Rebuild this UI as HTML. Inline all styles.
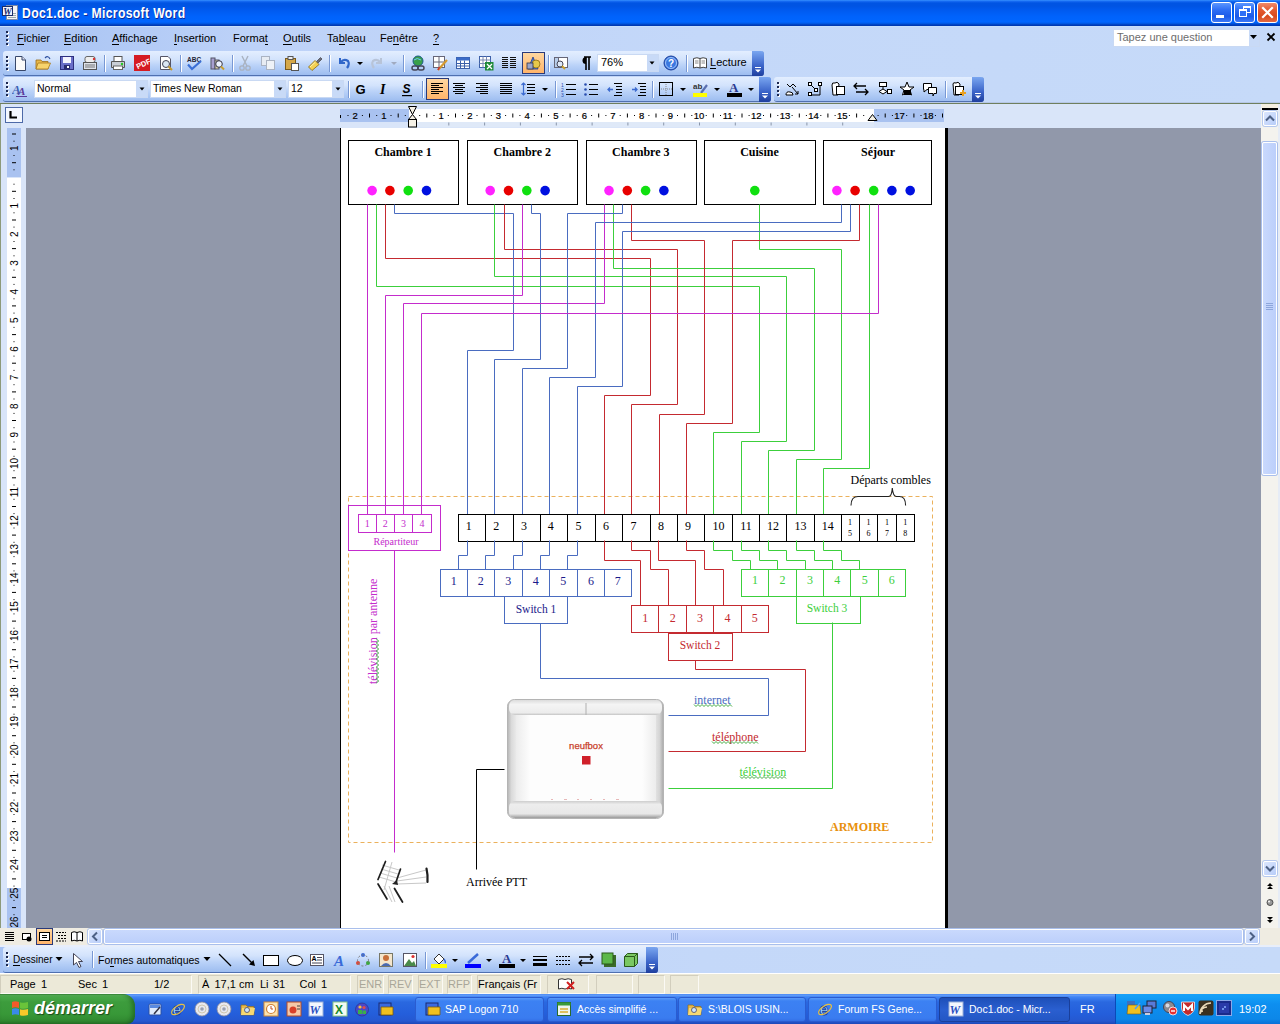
<!DOCTYPE html><html><head><meta charset="utf-8"><style>
html,body{margin:0;padding:0;width:1280px;height:1024px;overflow:hidden;position:relative;background:#c4d3f7;font-family:"Liberation Sans",sans-serif;}
div{box-sizing:border-box;}
.ser{font-family:"Liberation Serif",serif;}
.tb{position:absolute;border-radius:3px;background:linear-gradient(to bottom,#e3eeff 0%,#d3e3fc 35%,#bad2f8 60%,#9dbdf0 100%);border-bottom:1px solid #4f70b0;border-right:1px solid #7898d0;}
.grip{position:absolute;width:2px;height:2px;background:#1c2850;box-shadow:1px 1px 0 #fff;}
.sep{position:absolute;width:1px;height:17px;background:#7898d4;box-shadow:1px 0 0 #fff;}
.ico{position:absolute;}
.mi{position:absolute;top:32px;font-size:11px;color:#000;}
.mi u{text-decoration:none;border-bottom:1px solid #000;}
</style></head><body>

<div style="position:absolute;left:0px;top:0px;width:1280px;height:26px;background:linear-gradient(to bottom,#3b96ff 0px,#1a6ff5 1px,#0054e3 3px,#0054e3 6px,#005aef 10px,#0062fb 16px,#0066ff 22px,#0052d8 24px,#0039b3 25px,#0039b3 26px);"></div>
<svg style="position:absolute;left:2px;top:4px" width="17" height="17" viewBox="0 0 17 17">
<rect x="4.5" y="1.5" width="11" height="14" fill="#f4f4f4" stroke="#7b8aa8"/>
<rect x="6" y="9" width="8" height="1" fill="#9aa"/><rect x="6" y="11" width="8" height="1" fill="#9aa"/><rect x="6" y="13" width="8" height="1" fill="#9aa"/>
<rect x="0.5" y="2.5" width="10" height="9" fill="#f0f4ff" stroke="#1b2e6a"/>
<text x="1.2" y="10.5" font-family="Liberation Serif" font-weight="bold" font-style="italic" font-size="9.5" fill="#1a2a70">W</text>
</svg>
<div style="position:absolute;left:22px;top:5px;white-space:nowrap;font-size:14px;font-weight:bold;color:#fff;text-shadow:1px 1px 0 #0a2a9a;letter-spacing:0.4px;transform:scaleX(0.87);transform-origin:0 0;">Doc1.doc - Microsoft Word</div>
<div style="position:absolute;left:1211px;top:2px;width:21px;height:21px;border:1px solid #fff;border-radius:3px;background:linear-gradient(to bottom,#5b96ff 0%,#2f6ff5 35%,#1c5ae8 70%,#3a78f7 100%);"></div>
<div style="position:absolute;left:1234px;top:2px;width:21px;height:21px;border:1px solid #fff;border-radius:3px;background:linear-gradient(to bottom,#5b96ff 0%,#2f6ff5 35%,#1c5ae8 70%,#3a78f7 100%);"></div>
<div style="position:absolute;left:1257px;top:2px;width:21px;height:21px;border:1px solid #fff;border-radius:3px;background:linear-gradient(to bottom,#f08a6a 0%,#e2582e 40%,#d84a1e 70%,#e46a42 100%);"></div>
<div style="position:absolute;left:1216px;top:15px;width:8px;height:3px;background:#fff;"></div>
<div style="position:absolute;left:1243px;top:6px;width:8px;height:7px;border:1px solid #fff;border-top-width:2px;"></div>
<div style="position:absolute;left:1239px;top:9px;width:8px;height:8px;border:1px solid #fff;border-top-width:2px;background:#2f6ff5;"></div>
<svg style="position:absolute;left:1257px;top:2px" width="21" height="21"><path d="M6 6 L15 15 M15 6 L6 15" stroke="#fff" stroke-width="2.2" stroke-linecap="square"/></svg>
<div style="position:absolute;left:0px;top:26px;width:1280px;height:77px;background:linear-gradient(to right,#a6c2f3 0px,#bdd2f8 250px,#c4d8f9 700px,#c6daf9 1280px);"></div>
<div style="position:absolute;left:0px;top:26px;width:1280px;height:1px;background:#c8e0fb;"></div>
<div class="grip" style="left:6px;top:31px"></div>
<div class="grip" style="left:6px;top:35px"></div>
<div class="grip" style="left:6px;top:39px"></div>
<div class="grip" style="left:6px;top:43px"></div>
<div class="mi" style="left:17px;"><u>F</u>ichier</div>
<div class="mi" style="left:64px;"><u>E</u>dition</div>
<div class="mi" style="left:112px;"><u>A</u>ffichage</div>
<div class="mi" style="left:174px;"><u>I</u>nsertion</div>
<div class="mi" style="left:233px;">Forma<u>t</u></div>
<div class="mi" style="left:283px;"><u>O</u>utils</div>
<div class="mi" style="left:327px;">Ta<u>b</u>leau</div>
<div class="mi" style="left:380px;">Fe<u>n</u>être</div>
<div class="mi" style="left:433px;"><u>?</u></div>
<div style="position:absolute;left:1113px;top:29px;width:147px;height:18px;background:#fff;border:1px solid #c9d9f3;"></div>
<div style="position:absolute;left:1117px;top:31px;white-space:nowrap;font-size:11px;color:#6d6d6d;">Tapez une question</div>
<div style="position:absolute;left:1249px;top:30px;width:10px;height:16px;background:#c8daf7;"></div>
<svg style="position:absolute;left:1250px;top:35px" width="8" height="5"><path d="M0 0 H7 L3.5 4Z" fill="#000"/></svg>
<svg style="position:absolute;left:1266px;top:32px" width="10" height="10"><path d="M1.5 1.5 L8.5 8.5 M8.5 1.5 L1.5 8.5" stroke="#000" stroke-width="1.8"/></svg>
<div class="tb" style="left:3px;top:51px;width:761px;height:25px;"></div>
<div class="grip" style="left:6px;top:56px"></div>
<div class="grip" style="left:6px;top:60px"></div>
<div class="grip" style="left:6px;top:64px"></div>
<div class="grip" style="left:6px;top:68px"></div>
<div style="position:absolute;left:752px;top:51px;width:12px;height:25px;border-radius:0 3px 3px 0;background:linear-gradient(to bottom,#7aa6f0,#3a63c8 60%,#1f3f9e);"></div>
<svg style="position:absolute;left:754px;top:67px" width="8" height="7"><path d="M1 0.5 H7" stroke="#fff" stroke-width="1"/><path d="M1 2.5 H7 L4 5.5Z" fill="#fff"/></svg>
<div class="tb" style="left:3px;top:77px;width:768px;height:25px;"></div>
<div class="grip" style="left:6px;top:82px"></div>
<div class="grip" style="left:6px;top:86px"></div>
<div class="grip" style="left:6px;top:90px"></div>
<div class="grip" style="left:6px;top:94px"></div>
<div style="position:absolute;left:759px;top:77px;width:12px;height:25px;border-radius:0 3px 3px 0;background:linear-gradient(to bottom,#7aa6f0,#3a63c8 60%,#1f3f9e);"></div>
<svg style="position:absolute;left:761px;top:93px" width="8" height="7"><path d="M1 0.5 H7" stroke="#fff" stroke-width="1"/><path d="M1 2.5 H7 L4 5.5Z" fill="#fff"/></svg>
<div class="tb" style="left:774px;top:77px;width:210px;height:25px;"></div>
<div class="grip" style="left:777px;top:82px"></div>
<div class="grip" style="left:777px;top:86px"></div>
<div class="grip" style="left:777px;top:90px"></div>
<div class="grip" style="left:777px;top:94px"></div>
<div style="position:absolute;left:972px;top:77px;width:12px;height:25px;border-radius:0 3px 3px 0;background:linear-gradient(to bottom,#7aa6f0,#3a63c8 60%,#1f3f9e);"></div>
<svg style="position:absolute;left:974px;top:93px" width="8" height="7"><path d="M1 0.5 H7" stroke="#fff" stroke-width="1"/><path d="M1 2.5 H7 L4 5.5Z" fill="#fff"/></svg>
<svg class="ico" style="left:12px;top:55px" width="16" height="16" viewBox="0 0 16 16"><path d="M3.5 1.5 H10 L13.5 5 V15.5 H3.5Z" fill="#fafafa" stroke="#37476a"/><path d="M10 1.5 V5 H13.5" fill="#dde" stroke="#37476a"/></svg>
<svg class="ico" style="left:35px;top:55px" width="16" height="16" viewBox="0 0 16 16"><path d="M1 5 H6 L7 6.5 H13 V14 H1Z" fill="#e8b84a" stroke="#9b6d1a" stroke-width="0.8"/><path d="M3 8 H15.5 L13 14 H1Z" fill="#f7d36b" stroke="#a87a20" stroke-width="0.8"/><path d="M10 3 Q13 0 15 4" fill="none" stroke="#2d4f9e" stroke-width="1.2"/></svg>
<svg class="ico" style="left:59px;top:55px" width="16" height="16" viewBox="0 0 16 16"><rect x="1.5" y="1.5" width="13" height="13" fill="#6a6fc8" stroke="#2e2f7e"/><rect x="4" y="2" width="8" height="6" fill="#f4f4ff"/><rect x="5" y="10" width="6" height="4" fill="#2a2c70"/><rect x="8" y="11" width="2" height="2" fill="#fff"/></svg>
<svg class="ico" style="left:82px;top:55px" width="16" height="16" viewBox="0 0 16 16"><rect x="3" y="1.5" width="10" height="6" fill="#eee" stroke="#666" rx="2"/><rect x="1.5" y="7.5" width="13" height="7" fill="#dfe3ea" stroke="#555"/><rect x="3" y="9.5" width="10" height="1" fill="#777"/><rect x="3" y="11.5" width="10" height="1" fill="#777"/><circle cx="12" cy="4" r="1.2" fill="#d33"/></svg>
<svg class="ico" style="left:110px;top:55px" width="16" height="16" viewBox="0 0 16 16"><rect x="4" y="1.5" width="8" height="5" fill="#fff" stroke="#555"/><path d="M1.5 6.5 H14.5 V12.5 H1.5Z" fill="#c9ced6" stroke="#555"/><rect x="3.5" y="11" width="9" height="3.5" fill="#fff" stroke="#666"/><circle cx="12" cy="9" r="1.2" fill="#2c2"/></svg>
<svg class="ico" style="left:134px;top:55px" width="16" height="16" viewBox="0 0 16 16"><rect x="0" y="0" width="16" height="16" fill="#d51b22"/><text x="1.5" y="12" font-family="Liberation Sans" font-weight="bold" font-size="7.5" fill="#fff" transform="rotate(-25 8 8)">PDF</text></svg>
<svg class="ico" style="left:158px;top:55px" width="16" height="16" viewBox="0 0 16 16"><path d="M2.5 1.5 H10 L12.5 4 V14.5 H2.5Z" fill="#fff" stroke="#556"/><circle cx="8" cy="9" r="3.5" fill="#dce8f4" stroke="#445"/><path d="M10.5 11.5 L14 15" stroke="#c79a2a" stroke-width="2"/></svg>
<svg class="ico" style="left:186px;top:55px" width="16" height="16" viewBox="0 0 16 16"><text x="1" y="6.5" font-family="Liberation Sans" font-weight="bold" font-size="6.5" fill="#223">ABC</text><path d="M2 9.5 L6 14 L15 6" fill="none" stroke="#3a6fd6" stroke-width="2.2"/></svg>
<svg class="ico" style="left:209px;top:55px" width="16" height="16" viewBox="0 0 16 16"><rect x="2" y="3" width="4" height="11" fill="#a7a0d0" stroke="#556"/><rect x="6" y="5" width="4" height="9" fill="#d8d0a0" stroke="#556"/><circle cx="10" cy="9" r="3.3" fill="#eef4ff" stroke="#334" /><path d="M12 11.5 L15 14.5" stroke="#c9a030" stroke-width="2"/></svg>
<svg class="ico" style="left:237px;top:55px" width="16" height="16" viewBox="0 0 16 16"><path d="M5 1 L10 11 M11 1 L6 11" stroke="#a9b2c0" stroke-width="1.4"/><circle cx="5" cy="13" r="2.2" fill="none" stroke="#a9b2c0" stroke-width="1.3"/><circle cx="11" cy="13" r="2.2" fill="none" stroke="#a9b2c0" stroke-width="1.3"/></svg>
<svg class="ico" style="left:260px;top:55px" width="16" height="16" viewBox="0 0 16 16"><rect x="1.5" y="1.5" width="8" height="9" fill="#e7ecf3" stroke="#aab3c2"/><rect x="6.5" y="5.5" width="8" height="9" fill="#eef2f7" stroke="#aab3c2"/></svg>
<svg class="ico" style="left:284px;top:55px" width="16" height="16" viewBox="0 0 16 16"><rect x="1.5" y="3.5" width="10" height="11" fill="#d5a84a" stroke="#7b5a1c"/><rect x="4" y="1.5" width="5" height="3" fill="#eee" stroke="#555"/><rect x="7.5" y="8.5" width="7" height="7" fill="#fff" stroke="#555"/></svg>
<svg class="ico" style="left:307px;top:55px" width="16" height="16" viewBox="0 0 16 16"><path d="M9.5 6.5 L13.5 2.5 L15 4 L11 8Z" fill="#6a6a7a" stroke="#333" stroke-width="0.6"/><path d="M1.5 12 L8 5.5 L12 9.5 L5 15.5Z" fill="#f4d050" stroke="#8a6a10" stroke-width="0.8"/><path d="M3 12 L8.5 7" stroke="#fff4b0" stroke-width="1"/></svg>
<svg class="ico" style="left:336px;top:55px" width="16" height="16" viewBox="0 0 16 16"><path d="M4 3 V8 H9" fill="none" stroke="#3167c9" stroke-width="2"/><path d="M4.5 7.5 Q8 3 12 6 Q14 9 11 13" fill="none" stroke="#3167c9" stroke-width="2.2"/></svg>
<svg class="ico" style="left:369px;top:55px" width="16" height="16" viewBox="0 0 16 16"><path d="M12 3 V8 H7" fill="none" stroke="#b8c4d8" stroke-width="2"/><path d="M11.5 7.5 Q8 3 4 6 Q2 9 5 13" fill="none" stroke="#b8c4d8" stroke-width="2.2"/></svg>
<svg class="ico" style="left:410px;top:55px" width="16" height="16" viewBox="0 0 16 16"><circle cx="8" cy="6" r="5" fill="#3aa04a" stroke="#1d5a8a"/><path d="M4 5 Q7 2 11 5" fill="none" stroke="#6fc4ff"/><rect x="2" y="11" width="6" height="4" rx="2" fill="none" stroke="#445" stroke-width="1.4"/><rect x="8" y="11" width="6" height="4" rx="2" fill="none" stroke="#445" stroke-width="1.4"/></svg>
<svg class="ico" style="left:432px;top:55px" width="16" height="16" viewBox="0 0 16 16"><rect x="1.5" y="1.5" width="11" height="11" fill="#fff" stroke="#667"/><path d="M7 1.5 V12.5 M1.5 7 H12.5" stroke="#667"/><path d="M6 15 L15 5" stroke="#d59a30" stroke-width="2.2"/><path d="M6 15 L7.5 12" stroke="#c33" stroke-width="1.5"/></svg>
<svg class="ico" style="left:455px;top:55px" width="16" height="16" viewBox="0 0 16 16"><rect x="1.5" y="2.5" width="13" height="11" fill="#fff" stroke="#3b5fa8"/><rect x="1.5" y="2.5" width="13" height="3" fill="#3b6cc8"/><path d="M5.5 5.5 V13.5 M9.5 5.5 V13.5 M1.5 8.5 H14.5 M1.5 11 H14.5" stroke="#3b5fa8"/></svg>
<svg class="ico" style="left:478px;top:55px" width="16" height="16" viewBox="0 0 16 16"><rect x="1.5" y="1.5" width="11" height="11" fill="#fff" stroke="#3b5fa8"/><path d="M1.5 5 H12.5 M1.5 8.5 H12.5 M5 1.5 V12.5 M8.5 1.5 V12.5" stroke="#7a8ab0"/><rect x="7" y="7" width="8.5" height="8.5" fill="#1f8a3a"/><path d="M9 9 L14 14 M14 9 L9 14" stroke="#fff" stroke-width="1.3"/></svg>
<svg class="ico" style="left:501px;top:55px" width="16" height="16" viewBox="0 0 16 16"><path d="M1 2.5 H7 M1 4.5 H7 M1 6.5 H7 M1 8.5 H7 M1 10.5 H7 M1 12.5 H7 M9 2.5 H15 M9 4.5 H15 M9 6.5 H15 M9 8.5 H15 M9 10.5 H15 M9 12.5 H15" stroke="#111" stroke-width="1"/></svg>
<svg class="ico" style="left:356px;top:55px" width="8" height="16" viewBox="0 0 8 16"><path d="M1 7 H7 L4 10Z" fill="#000"/></svg>
<svg class="ico" style="left:390px;top:55px" width="8" height="16" viewBox="0 0 8 16"><path d="M1 7 H7 L4 10Z" fill="#a0aac0"/></svg>
<div class="sep" style="left:104px;top:55px"></div>
<div class="sep" style="left:180px;top:55px"></div>
<div class="sep" style="left:232px;top:55px"></div>
<div class="sep" style="left:329px;top:55px"></div>
<div class="sep" style="left:403px;top:55px"></div>
<div class="sep" style="left:548px;top:55px"></div>
<div class="sep" style="left:686px;top:55px"></div>
<div style="position:absolute;left:522px;top:52px;width:23px;height:22px;background:linear-gradient(#ffd7a0,#ffb46a);border:1px solid #2a3a7a;"></div>
<svg class="ico" style="left:525px;top:55px" width="16" height="16" viewBox="0 0 16 16"><path d="M3 14 L8 2 L13 14Z" fill="#4d7ad8" stroke="#1d3a8a" stroke-width="0.8"/><circle cx="11" cy="9" r="4" fill="#e7c84a" stroke="#8a6a10" stroke-width="0.8"/><rect x="2" y="8" width="6" height="6" fill="#9aa4c8" stroke="#334" stroke-width="0.8"/></svg>
<svg class="ico" style="left:553px;top:55px" width="16" height="16" viewBox="0 0 16 16"><rect x="1.5" y="2.5" width="13" height="10" fill="#fff" stroke="#667"/><rect x="1.5" y="2.5" width="4" height="10" fill="#b8cdea" stroke="#667"/><circle cx="7" cy="9" r="3" fill="#dde8f8" stroke="#445"/><path d="M9 11 L12 14" stroke="#c9a030" stroke-width="2"/></svg>
<svg class="ico" style="left:577px;top:55px" width="16" height="16" viewBox="0 0 16 16"><path d="M7 2 H14 M9 2 V15 M12 2 V15" stroke="#000" stroke-width="1.6"/><path d="M9 2 A3.5 3.5 0 0 0 9 9Z" fill="#000"/></svg>
<div style="position:absolute;left:597px;top:54px;width:62px;height:18px;background:#fff;border:1px solid #c9d9f3;"></div>
<div style="position:absolute;left:601px;top:56px;white-space:nowrap;font-size:11px;color:#000;">76%</div>
<div style="position:absolute;left:647px;top:55px;width:11px;height:16px;background:#c8daf7;"></div>
<svg class="ico" style="left:648px;top:61px" width="8" height="5"><path d="M1.5 0.5 H6.5 L4 3.5Z" fill="#000"/></svg>
<svg class="ico" style="left:663px;top:55px" width="16" height="16" viewBox="0 0 16 16"><circle cx="8" cy="8" r="7" fill="#3b78e0" stroke="#1c3f9a"/><circle cx="8" cy="8" r="5.5" fill="none" stroke="#bcd6ff" stroke-width="0.8"/><text x="5" y="12" font-family="Liberation Sans" font-weight="bold" font-size="10" fill="#fff">?</text></svg>
<svg class="ico" style="left:692px;top:55px" width="16" height="16" viewBox="0 0 16 16"><path d="M1.5 3.5 Q5 2 8 3.5 Q11 2 14.5 3.5 V13 Q11 11.5 8 13 Q5 11.5 1.5 13Z" fill="#fff" stroke="#444"/><path d="M8 3.5 V13" stroke="#444"/><path d="M3 6 H6.5 M3 8 H6.5 M9.5 6 H13 M9.5 8 H13" stroke="#888"/></svg>
<div style="position:absolute;left:710px;top:56px;white-space:nowrap;font-size:11px;color:#000;"><u style="text-decoration:none;border-bottom:1px solid #000">L</u>ecture</div>
<svg class="ico" style="left:12px;top:81px" width="16" height="16" viewBox="0 0 16 16"><text x="0" y="13" font-family="Liberation Serif" font-style="italic" font-weight="bold" font-size="13" fill="#3f62b3">A</text><text x="6" y="14" font-family="Liberation Serif" font-style="italic" font-weight="bold" font-size="11" fill="#5a3a9a">A</text><rect x="4" y="15" width="11" height="1" fill="#5a3a9a"/></svg>
<div style="position:absolute;left:34px;top:80px;width:114px;height:18px;background:#fff;border:1px solid #c9d9f3;"></div>
<div style="position:absolute;left:37px;top:82px;white-space:nowrap;font-size:10.5px;color:#000;">Normal</div>
<div style="position:absolute;left:136px;top:81px;width:11px;height:16px;background:#c8daf7;"></div>
<svg class="ico" style="left:138px;top:87px" width="8" height="5"><path d="M1.5 0.5 H6.5 L4 3.5Z" fill="#000"/></svg>
<div style="position:absolute;left:150px;top:80px;width:136px;height:18px;background:#fff;border:1px solid #c9d9f3;"></div>
<div style="position:absolute;left:153px;top:82px;white-space:nowrap;font-size:10.5px;color:#000;">Times New Roman</div>
<div style="position:absolute;left:274px;top:81px;width:11px;height:16px;background:#c8daf7;"></div>
<svg class="ico" style="left:276px;top:87px" width="8" height="5"><path d="M1.5 0.5 H6.5 L4 3.5Z" fill="#000"/></svg>
<div style="position:absolute;left:288px;top:80px;width:56px;height:18px;background:#fff;border:1px solid #c9d9f3;"></div>
<div style="position:absolute;left:291px;top:82px;white-space:nowrap;font-size:10.5px;color:#000;">12</div>
<div style="position:absolute;left:332px;top:81px;width:11px;height:16px;background:#c8daf7;"></div>
<svg class="ico" style="left:334px;top:87px" width="8" height="5"><path d="M1.5 0.5 H6.5 L4 3.5Z" fill="#000"/></svg>
<div class="sep" style="left:348px;top:81px"></div>
<div class="sep" style="left:422px;top:81px"></div>
<div class="sep" style="left:555px;top:81px"></div>
<div class="sep" style="left:652px;top:81px"></div>
<div style="position:absolute;left:426px;top:78px;width:23px;height:22px;background:linear-gradient(#ffd7a0,#ffb46a);border:1px solid #2a3a7a;"></div>
<svg class="ico" style="left:353px;top:81px" width="16" height="16" viewBox="0 0 16 16"><text x="2.5" y="13" font-family="Liberation Sans" font-weight="bold" font-size="13" fill="#000">G</text></svg>
<svg class="ico" style="left:376px;top:81px" width="16" height="16" viewBox="0 0 16 16"><text x="4" y="13" font-family="Liberation Serif" font-style="italic" font-weight="bold" font-size="14" fill="#000">I</text></svg>
<svg class="ico" style="left:399px;top:81px" width="16" height="16" viewBox="0 0 16 16"><text x="3.5" y="12" font-family="Liberation Sans" font-style="italic" font-weight="bold" font-size="12" fill="#000">S</text><rect x="3" y="14" width="10" height="1.2" fill="#000"/></svg>
<svg class="ico" style="left:429px;top:81px" width="16" height="16" viewBox="0 0 16 16"><path d="M2 2.5 H14 M2 4.5 H10 M2 6.5 H14 M2 8.5 H10 M2 10.5 H14 M2 12.5 H10" stroke="#000" stroke-width="1"/></svg>
<svg class="ico" style="left:451px;top:81px" width="16" height="16" viewBox="0 0 16 16"><path d="M2 2.5 H14 M4 4.5 H12 M2 6.5 H14 M4 8.5 H12 M2 10.5 H14 M4 12.5 H12" stroke="#000" stroke-width="1"/></svg>
<svg class="ico" style="left:474px;top:81px" width="16" height="16" viewBox="0 0 16 16"><path d="M2 2.5 H14 M6 4.5 H14 M2 6.5 H14 M6 8.5 H14 M2 10.5 H14 M6 12.5 H14" stroke="#000" stroke-width="1"/></svg>
<svg class="ico" style="left:498px;top:81px" width="16" height="16" viewBox="0 0 16 16"><path d="M2 2.5 H14 M2 4.5 H14 M2 6.5 H14 M2 8.5 H14 M2 10.5 H14 M2 12.5 H14" stroke="#000" stroke-width="1"/></svg>
<svg class="ico" style="left:520px;top:81px" width="16" height="16" viewBox="0 0 16 16"><path d="M7 3.5 H15 M7 6.5 H15 M7 9.5 H15 M7 12.5 H15" stroke="#000"/><path d="M3.5 2 V14 M1.5 4 L3.5 2 L5.5 4 M1.5 12 L3.5 14 L5.5 12" fill="none" stroke="#3b6ad0" stroke-width="1.2"/></svg>
<svg class="ico" style="left:561px;top:81px" width="16" height="16" viewBox="0 0 16 16"><text x="0" y="6" font-size="5" font-family="Liberation Sans" fill="#2a4fb0">1</text><text x="0" y="11" font-size="5" font-family="Liberation Sans" fill="#2a4fb0">2</text><text x="0" y="16" font-size="5" font-family="Liberation Sans" fill="#2a4fb0">3</text><path d="M5 3.5 H15 M5 8.5 H15 M5 13.5 H15" stroke="#000" stroke-width="1"/></svg>
<svg class="ico" style="left:583px;top:81px" width="16" height="16" viewBox="0 0 16 16"><circle cx="2.5" cy="3.5" r="1.3" fill="#2a4fb0"/><circle cx="2.5" cy="8.5" r="1.3" fill="#2a4fb0"/><circle cx="2.5" cy="13.5" r="1.3" fill="#2a4fb0"/><path d="M6 3.5 H15 M6 8.5 H15 M6 13.5 H15" stroke="#000" stroke-width="1"/></svg>
<svg class="ico" style="left:607px;top:81px" width="16" height="16" viewBox="0 0 16 16"><path d="M7 2.5 H15 M9 5.5 H15 M9 8.5 H15 M9 11.5 H15 M7 14.5 H15" stroke="#000" stroke-width="1"/><path d="M6 8.5 H1 M3 6.5 L1 8.5 L3 10.5" fill="none" stroke="#3b6ad0" stroke-width="1.3"/></svg>
<svg class="ico" style="left:631px;top:81px" width="16" height="16" viewBox="0 0 16 16"><path d="M7 2.5 H15 M9 5.5 H15 M9 8.5 H15 M9 11.5 H15 M7 14.5 H15" stroke="#000" stroke-width="1"/><path d="M1 8.5 H6 M4 6.5 L6 8.5 L4 10.5" fill="none" stroke="#3b6ad0" stroke-width="1.3"/></svg>
<svg class="ico" style="left:658px;top:81px" width="16" height="16" viewBox="0 0 16 16"><rect x="1.5" y="1.5" width="13" height="13" fill="none" stroke="#000"/><path d="M8 3 V14 M3 8 H14" stroke="#888" stroke-dasharray="1 1"/></svg>
<svg class="ico" style="left:693px;top:81px" width="16" height="16" viewBox="0 0 16 16"><text x="0" y="8" font-size="8" font-family="Liberation Sans" font-weight="bold" fill="#333">ab</text><path d="M8 12 L14 4" stroke="#5a6fb0" stroke-width="2.2"/><rect x="0" y="12" width="14" height="4" fill="#ffff00"/></svg>
<svg class="ico" style="left:727px;top:81px" width="16" height="16" viewBox="0 0 16 16"><text x="2" y="11" font-size="13" font-family="Liberation Serif" font-weight="bold" fill="#2a3a90">A</text><rect x="0" y="12" width="15" height="4" fill="#000"/></svg>
<svg class="ico" style="left:541px;top:81px" width="8" height="16" viewBox="0 0 8 16"><path d="M1 7 H7 L4 10Z" fill="#000"/></svg>
<svg class="ico" style="left:679px;top:81px" width="8" height="16" viewBox="0 0 8 16"><path d="M1 7 H7 L4 10Z" fill="#000"/></svg>
<svg class="ico" style="left:713px;top:81px" width="8" height="16" viewBox="0 0 8 16"><path d="M1 7 H7 L4 10Z" fill="#000"/></svg>
<svg class="ico" style="left:747px;top:81px" width="8" height="16" viewBox="0 0 8 16"><path d="M1 7 H7 L4 10Z" fill="#000"/></svg>
<svg class="ico" style="left:784px;top:81px" width="16" height="16" viewBox="0 0 16 16"><path d="M3 3 L6 6 L9 3 L12 6" fill="none" stroke="#000"/><path d="M2 14 Q2 10 6 11 Q9 11 9 14Z" fill="#fff" stroke="#000"/><path d="M8 6 L14 13 M11 13 H14 V10" fill="none" stroke="#000"/></svg>
<svg class="ico" style="left:807px;top:81px" width="16" height="16" viewBox="0 0 16 16"><rect x="1.5" y="1.5" width="3" height="3" fill="#fff" stroke="#000"/><rect x="11.5" y="1.5" width="3" height="3" fill="#fff" stroke="#000"/><rect x="7.5" y="7.5" width="3" height="3" fill="#fff" stroke="#000"/><rect x="1.5" y="11.5" width="3" height="3" fill="#fff" stroke="#000"/><path d="M4 4 L8 8 M13 4.5 V14 H4.5" fill="none" stroke="#000"/></svg>
<svg class="ico" style="left:830px;top:81px" width="16" height="16" viewBox="0 0 16 16"><path d="M2 4 Q2 1 5 2 Q7 0 9 3 L8 14 H3Z" fill="#fff" stroke="#000"/><rect x="6.5" y="5.5" width="8" height="8" fill="#fff" stroke="#000"/></svg>
<svg class="ico" style="left:853px;top:81px" width="16" height="16" viewBox="0 0 16 16"><path d="M1 5 H13 M4 2 L1 5 L4 8 M15 11 H3 M12 8 L15 11 L12 14" fill="none" stroke="#000" stroke-width="1.3"/></svg>
<svg class="ico" style="left:876px;top:81px" width="16" height="16" viewBox="0 0 16 16"><rect x="3.5" y="1.5" width="7" height="4" fill="#fff" stroke="#000"/><path d="M7 5.5 V8 M3 10.5 L7 8 L11 10.5 L7 13Z" fill="#fff" stroke="#000"/><rect x="11.5" y="8.5" width="4" height="4" fill="#fff" stroke="#000"/></svg>
<svg class="ico" style="left:899px;top:81px" width="16" height="16" viewBox="0 0 16 16"><path d="M8 1 L10 6 L15 6 L11 9 L12.5 14 L8 11 L3.5 14 L5 9 L1 6 L6 6Z" fill="#fff" stroke="#000"/><rect x="5" y="9" width="7" height="5" fill="#000"/></svg>
<svg class="ico" style="left:922px;top:81px" width="16" height="16" viewBox="0 0 16 16"><path d="M1.5 2.5 H9.5 V8.5 H5 L2 11 V8.5 H1.5Z" fill="#fff" stroke="#000"/><path d="M6.5 6.5 H14.5 V12.5 H12 L11 15 V12.5 H6.5Z" fill="#fff" stroke="#000"/></svg>
<svg class="ico" style="left:951px;top:81px" width="16" height="16" viewBox="0 0 16 16"><path d="M2 3 Q2 1 5 2 Q7 0 9 3 L8 14 H3Z" fill="#fff" stroke="#000"/><rect x="4.5" y="5.5" width="8" height="8" fill="#fff" stroke="#000"/><path d="M12 9 V15 M9 12 H15" stroke="#e8a020" stroke-width="2"/></svg>
<div class="sep" style="left:945px;top:81px"></div>
<div style="position:absolute;left:0px;top:102px;width:1280px;height:1px;background:#b6c7e6;"></div>
<div style="position:absolute;left:0px;top:103px;width:1280px;height:1px;background:#6f7f5e;"></div>
<div style="position:absolute;left:0px;top:104px;width:1280px;height:824px;background:#d9e5f9;"></div>
<div style="position:absolute;left:0px;top:104px;width:2px;height:870px;background:#d9e5f9;border-left:1px solid #8d9a7a;"></div>
<div style="position:absolute;left:5px;top:107px;width:18px;height:16px;background:#f4f8ff;border:1px solid #4d6aa8;"></div>
<svg class="ico" style="left:9px;top:111px" width="9" height="8"><path d="M1.5 0 V6.5 H8" fill="none" stroke="#000" stroke-width="2.2"/></svg>
<div style="position:absolute;left:26px;top:128px;width:1235px;height:800px;background:#9198aa;"></div>
<div style="position:absolute;left:340px;top:128px;width:1px;height:800px;background:#000;"></div>
<div style="position:absolute;left:341px;top:128px;width:604px;height:800px;background:#fff;"></div>
<div style="position:absolute;left:945px;top:128px;width:3px;height:800px;background:#000;"></div>
<svg style="position:absolute;left:0;top:104px" width="1280" height="24"><rect x="340" y="5" width="69" height="13" fill="#a9c2f0"/><rect x="409" y="5" width="465" height="13" fill="#fff"/><rect x="874" y="5" width="70" height="13" fill="#a9c2f0"/><rect x="409" y="18" width="465" height="5" fill="#dfe9f8"/><rect x="340" y="11" width="1" height="3" fill="#000"/><rect x="347.5" y="11" width="1" height="1" fill="#000"/><text x="355.2" y="14.8" font-family="Liberation Sans" font-size="9.5" stroke="#000" stroke-width="0.2" text-anchor="middle" fill="#000">2</text><rect x="361.9" y="11" width="1" height="1" fill="#000"/><rect x="369.0" y="9.5" width="1" height="4" fill="#000"/><rect x="376.2" y="11" width="1" height="1" fill="#000"/><text x="383.9" y="14.8" font-family="Liberation Sans" font-size="9.5" stroke="#000" stroke-width="0.2" text-anchor="middle" fill="#000">1</text><rect x="390.5" y="11" width="1" height="1" fill="#000"/><rect x="397.7" y="9.5" width="1" height="4" fill="#000"/><rect x="404.8" y="11" width="1" height="1" fill="#000"/><rect x="419.2" y="11" width="1" height="1" fill="#000"/><rect x="426.3" y="9.5" width="1" height="4" fill="#000"/><rect x="433.5" y="11" width="1" height="1" fill="#000"/><text x="441.1" y="14.8" font-family="Liberation Sans" font-size="9.5" stroke="#000" stroke-width="0.2" text-anchor="middle" fill="#000">1</text><rect x="447.8" y="11" width="1" height="1" fill="#000"/><rect x="455.0" y="9.5" width="1" height="4" fill="#000"/><rect x="462.1" y="11" width="1" height="1" fill="#000"/><text x="469.8" y="14.8" font-family="Liberation Sans" font-size="9.5" stroke="#000" stroke-width="0.2" text-anchor="middle" fill="#000">2</text><rect x="476.5" y="11" width="1" height="1" fill="#000"/><rect x="483.6" y="9.5" width="1" height="4" fill="#000"/><rect x="490.8" y="11" width="1" height="1" fill="#000"/><text x="498.4" y="14.8" font-family="Liberation Sans" font-size="9.5" stroke="#000" stroke-width="0.2" text-anchor="middle" fill="#000">3</text><rect x="505.1" y="11" width="1" height="1" fill="#000"/><rect x="512.3" y="9.5" width="1" height="4" fill="#000"/><rect x="519.4" y="11" width="1" height="1" fill="#000"/><text x="527.1" y="14.8" font-family="Liberation Sans" font-size="9.5" stroke="#000" stroke-width="0.2" text-anchor="middle" fill="#000">4</text><rect x="533.8" y="11" width="1" height="1" fill="#000"/><rect x="540.9" y="9.5" width="1" height="4" fill="#000"/><rect x="548.1" y="11" width="1" height="1" fill="#000"/><text x="555.8" y="14.8" font-family="Liberation Sans" font-size="9.5" stroke="#000" stroke-width="0.2" text-anchor="middle" fill="#000">5</text><rect x="562.4" y="11" width="1" height="1" fill="#000"/><rect x="569.6" y="9.5" width="1" height="4" fill="#000"/><rect x="576.7" y="11" width="1" height="1" fill="#000"/><text x="584.4" y="14.8" font-family="Liberation Sans" font-size="9.5" stroke="#000" stroke-width="0.2" text-anchor="middle" fill="#000">6</text><rect x="591.1" y="11" width="1" height="1" fill="#000"/><rect x="598.2" y="9.5" width="1" height="4" fill="#000"/><rect x="605.4" y="11" width="1" height="1" fill="#000"/><text x="613.0" y="14.8" font-family="Liberation Sans" font-size="9.5" stroke="#000" stroke-width="0.2" text-anchor="middle" fill="#000">7</text><rect x="619.7" y="11" width="1" height="1" fill="#000"/><rect x="626.9" y="9.5" width="1" height="4" fill="#000"/><rect x="634.0" y="11" width="1" height="1" fill="#000"/><text x="641.7" y="14.8" font-family="Liberation Sans" font-size="9.5" stroke="#000" stroke-width="0.2" text-anchor="middle" fill="#000">8</text><rect x="648.4" y="11" width="1" height="1" fill="#000"/><rect x="655.5" y="9.5" width="1" height="4" fill="#000"/><rect x="662.7" y="11" width="1" height="1" fill="#000"/><text x="670.3" y="14.8" font-family="Liberation Sans" font-size="9.5" stroke="#000" stroke-width="0.2" text-anchor="middle" fill="#000">9</text><rect x="677.0" y="11" width="1" height="1" fill="#000"/><rect x="684.2" y="9.5" width="1" height="4" fill="#000"/><rect x="691.3" y="11" width="1" height="1" fill="#000"/><text x="699.0" y="14.8" font-family="Liberation Sans" font-size="9.5" stroke="#000" stroke-width="0.2" text-anchor="middle" fill="#000">10</text><rect x="705.7" y="11" width="1" height="1" fill="#000"/><rect x="712.8" y="9.5" width="1" height="4" fill="#000"/><rect x="720.0" y="11" width="1" height="1" fill="#000"/><text x="727.6" y="14.8" font-family="Liberation Sans" font-size="9.5" stroke="#000" stroke-width="0.2" text-anchor="middle" fill="#000">11</text><rect x="734.3" y="11" width="1" height="1" fill="#000"/><rect x="741.5" y="9.5" width="1" height="4" fill="#000"/><rect x="748.6" y="11" width="1" height="1" fill="#000"/><text x="756.3" y="14.8" font-family="Liberation Sans" font-size="9.5" stroke="#000" stroke-width="0.2" text-anchor="middle" fill="#000">12</text><rect x="763.0" y="11" width="1" height="1" fill="#000"/><rect x="770.1" y="9.5" width="1" height="4" fill="#000"/><rect x="777.3" y="11" width="1" height="1" fill="#000"/><text x="785.0" y="14.8" font-family="Liberation Sans" font-size="9.5" stroke="#000" stroke-width="0.2" text-anchor="middle" fill="#000">13</text><rect x="791.6" y="11" width="1" height="1" fill="#000"/><rect x="798.8" y="9.5" width="1" height="4" fill="#000"/><rect x="805.9" y="11" width="1" height="1" fill="#000"/><text x="813.6" y="14.8" font-family="Liberation Sans" font-size="9.5" stroke="#000" stroke-width="0.2" text-anchor="middle" fill="#000">14</text><rect x="820.3" y="11" width="1" height="1" fill="#000"/><rect x="827.4" y="9.5" width="1" height="4" fill="#000"/><rect x="834.6" y="11" width="1" height="1" fill="#000"/><text x="842.2" y="14.8" font-family="Liberation Sans" font-size="9.5" stroke="#000" stroke-width="0.2" text-anchor="middle" fill="#000">15</text><rect x="848.9" y="11" width="1" height="1" fill="#000"/><rect x="856.1" y="9.5" width="1" height="4" fill="#000"/><rect x="863.2" y="11" width="1" height="1" fill="#000"/><rect x="877.6" y="11" width="1" height="1" fill="#000"/><rect x="884.7" y="9.5" width="1" height="4" fill="#000"/><rect x="891.9" y="11" width="1" height="1" fill="#000"/><text x="899.5" y="14.8" font-family="Liberation Sans" font-size="9.5" stroke="#000" stroke-width="0.2" text-anchor="middle" fill="#000">17</text><rect x="906.2" y="11" width="1" height="1" fill="#000"/><rect x="913.4" y="9.5" width="1" height="4" fill="#000"/><rect x="920.5" y="11" width="1" height="1" fill="#000"/><text x="928.2" y="14.8" font-family="Liberation Sans" font-size="9.5" stroke="#000" stroke-width="0.2" text-anchor="middle" fill="#000">18</text><rect x="934.9" y="11" width="1" height="1" fill="#000"/><rect x="942.0" y="9.5" width="1" height="4" fill="#000"/><rect x="448.3" y="18.5" width="1" height="3" fill="#8a96aa"/><rect x="484.1" y="18.5" width="1" height="3" fill="#8a96aa"/><rect x="519.9" y="18.5" width="1" height="3" fill="#8a96aa"/><rect x="555.8" y="18.5" width="1" height="3" fill="#8a96aa"/><rect x="591.6" y="18.5" width="1" height="3" fill="#8a96aa"/><rect x="627.4" y="18.5" width="1" height="3" fill="#8a96aa"/><rect x="663.2" y="18.5" width="1" height="3" fill="#8a96aa"/><rect x="699.0" y="18.5" width="1" height="3" fill="#8a96aa"/><rect x="734.8" y="18.5" width="1" height="3" fill="#8a96aa"/><rect x="770.6" y="18.5" width="1" height="3" fill="#8a96aa"/><rect x="806.4" y="18.5" width="1" height="3" fill="#8a96aa"/><rect x="842.2" y="18.5" width="1" height="3" fill="#8a96aa"/><path d="M408.5 2.5 H416.5 L412.5 10.5Z" fill="#f5f1e6" stroke="#000"/><path d="M412.5 10.5 L408.5 15.5 H416.5Z" fill="#f5f1e6" stroke="#000"/><rect x="408.5" y="15.5" width="8" height="7.5" fill="#f5f1e6" stroke="#000"/><path d="M872.5 10.5 L868 16.5 H877 Z" fill="#f5f1e6" stroke="#000"/></svg>
<svg style="position:absolute;left:0;top:128px" width="26" height="800"><rect x="7" y="0" width="14" height="49" fill="#a9c2f0"/><rect x="7" y="50" width="14" height="710" fill="#fff"/><rect x="7" y="760" width="14" height="40" fill="#a9c2f0"/><rect x="12" y="5.5" width="4" height="1" fill="#000"/><rect x="13.5" y="12.7" width="1" height="1" fill="#000"/><text transform="translate(17.5,20.3) rotate(-90)" font-family="Liberation Sans" font-size="10" text-anchor="middle" fill="#000">1</text><rect x="13.5" y="27.0" width="1" height="1" fill="#000"/><rect x="12" y="34.2" width="4" height="1" fill="#000"/><rect x="13.5" y="41.3" width="1" height="1" fill="#000"/><rect x="13.5" y="55.7" width="1" height="1" fill="#000"/><rect x="12" y="62.8" width="4" height="1" fill="#000"/><rect x="13.5" y="70.0" width="1" height="1" fill="#000"/><text transform="translate(17.5,77.7) rotate(-90)" font-family="Liberation Sans" font-size="10" text-anchor="middle" fill="#000">1</text><rect x="13.5" y="84.3" width="1" height="1" fill="#000"/><rect x="12" y="91.5" width="4" height="1" fill="#000"/><rect x="13.5" y="98.6" width="1" height="1" fill="#000"/><text transform="translate(17.5,106.3) rotate(-90)" font-family="Liberation Sans" font-size="10" text-anchor="middle" fill="#000">2</text><rect x="13.5" y="113.0" width="1" height="1" fill="#000"/><rect x="12" y="120.1" width="4" height="1" fill="#000"/><rect x="13.5" y="127.3" width="1" height="1" fill="#000"/><text transform="translate(17.5,134.9) rotate(-90)" font-family="Liberation Sans" font-size="10" text-anchor="middle" fill="#000">3</text><rect x="13.5" y="141.6" width="1" height="1" fill="#000"/><rect x="12" y="148.8" width="4" height="1" fill="#000"/><rect x="13.5" y="155.9" width="1" height="1" fill="#000"/><text transform="translate(17.5,163.6) rotate(-90)" font-family="Liberation Sans" font-size="10" text-anchor="middle" fill="#000">4</text><rect x="13.5" y="170.3" width="1" height="1" fill="#000"/><rect x="12" y="177.4" width="4" height="1" fill="#000"/><rect x="13.5" y="184.6" width="1" height="1" fill="#000"/><text transform="translate(17.5,192.2) rotate(-90)" font-family="Liberation Sans" font-size="10" text-anchor="middle" fill="#000">5</text><rect x="13.5" y="198.9" width="1" height="1" fill="#000"/><rect x="12" y="206.1" width="4" height="1" fill="#000"/><rect x="13.5" y="213.2" width="1" height="1" fill="#000"/><text transform="translate(17.5,220.9) rotate(-90)" font-family="Liberation Sans" font-size="10" text-anchor="middle" fill="#000">6</text><rect x="13.5" y="227.6" width="1" height="1" fill="#000"/><rect x="12" y="234.7" width="4" height="1" fill="#000"/><rect x="13.5" y="241.9" width="1" height="1" fill="#000"/><text transform="translate(17.5,249.5) rotate(-90)" font-family="Liberation Sans" font-size="10" text-anchor="middle" fill="#000">7</text><rect x="13.5" y="256.2" width="1" height="1" fill="#000"/><rect x="12" y="263.4" width="4" height="1" fill="#000"/><rect x="13.5" y="270.5" width="1" height="1" fill="#000"/><text transform="translate(17.5,278.2) rotate(-90)" font-family="Liberation Sans" font-size="10" text-anchor="middle" fill="#000">8</text><rect x="13.5" y="284.9" width="1" height="1" fill="#000"/><rect x="12" y="292.0" width="4" height="1" fill="#000"/><rect x="13.5" y="299.2" width="1" height="1" fill="#000"/><text transform="translate(17.5,306.8) rotate(-90)" font-family="Liberation Sans" font-size="10" text-anchor="middle" fill="#000">9</text><rect x="13.5" y="313.5" width="1" height="1" fill="#000"/><rect x="12" y="320.7" width="4" height="1" fill="#000"/><rect x="13.5" y="327.8" width="1" height="1" fill="#000"/><text transform="translate(17.5,335.5) rotate(-90)" font-family="Liberation Sans" font-size="10" text-anchor="middle" fill="#000">10</text><rect x="13.5" y="342.2" width="1" height="1" fill="#000"/><rect x="12" y="349.3" width="4" height="1" fill="#000"/><rect x="13.5" y="356.5" width="1" height="1" fill="#000"/><text transform="translate(17.5,364.1) rotate(-90)" font-family="Liberation Sans" font-size="10" text-anchor="middle" fill="#000">11</text><rect x="13.5" y="370.8" width="1" height="1" fill="#000"/><rect x="12" y="378.0" width="4" height="1" fill="#000"/><rect x="13.5" y="385.1" width="1" height="1" fill="#000"/><text transform="translate(17.5,392.8) rotate(-90)" font-family="Liberation Sans" font-size="10" text-anchor="middle" fill="#000">12</text><rect x="13.5" y="399.5" width="1" height="1" fill="#000"/><rect x="12" y="406.6" width="4" height="1" fill="#000"/><rect x="13.5" y="413.8" width="1" height="1" fill="#000"/><text transform="translate(17.5,421.5) rotate(-90)" font-family="Liberation Sans" font-size="10" text-anchor="middle" fill="#000">13</text><rect x="13.5" y="428.1" width="1" height="1" fill="#000"/><rect x="12" y="435.3" width="4" height="1" fill="#000"/><rect x="13.5" y="442.4" width="1" height="1" fill="#000"/><text transform="translate(17.5,450.1) rotate(-90)" font-family="Liberation Sans" font-size="10" text-anchor="middle" fill="#000">14</text><rect x="13.5" y="456.8" width="1" height="1" fill="#000"/><rect x="12" y="463.9" width="4" height="1" fill="#000"/><rect x="13.5" y="471.1" width="1" height="1" fill="#000"/><text transform="translate(17.5,478.8) rotate(-90)" font-family="Liberation Sans" font-size="10" text-anchor="middle" fill="#000">15</text><rect x="13.5" y="485.4" width="1" height="1" fill="#000"/><rect x="12" y="492.6" width="4" height="1" fill="#000"/><rect x="13.5" y="499.7" width="1" height="1" fill="#000"/><text transform="translate(17.5,507.4) rotate(-90)" font-family="Liberation Sans" font-size="10" text-anchor="middle" fill="#000">16</text><rect x="13.5" y="514.1" width="1" height="1" fill="#000"/><rect x="12" y="521.2" width="4" height="1" fill="#000"/><rect x="13.5" y="528.4" width="1" height="1" fill="#000"/><text transform="translate(17.5,536.0) rotate(-90)" font-family="Liberation Sans" font-size="10" text-anchor="middle" fill="#000">17</text><rect x="13.5" y="542.7" width="1" height="1" fill="#000"/><rect x="12" y="549.9" width="4" height="1" fill="#000"/><rect x="13.5" y="557.0" width="1" height="1" fill="#000"/><text transform="translate(17.5,564.7) rotate(-90)" font-family="Liberation Sans" font-size="10" text-anchor="middle" fill="#000">18</text><rect x="13.5" y="571.4" width="1" height="1" fill="#000"/><rect x="12" y="578.5" width="4" height="1" fill="#000"/><rect x="13.5" y="585.7" width="1" height="1" fill="#000"/><text transform="translate(17.5,593.4) rotate(-90)" font-family="Liberation Sans" font-size="10" text-anchor="middle" fill="#000">19</text><rect x="13.5" y="600.0" width="1" height="1" fill="#000"/><rect x="12" y="607.2" width="4" height="1" fill="#000"/><rect x="13.5" y="614.3" width="1" height="1" fill="#000"/><text transform="translate(17.5,622.0) rotate(-90)" font-family="Liberation Sans" font-size="10" text-anchor="middle" fill="#000">20</text><rect x="13.5" y="628.7" width="1" height="1" fill="#000"/><rect x="12" y="635.8" width="4" height="1" fill="#000"/><rect x="13.5" y="643.0" width="1" height="1" fill="#000"/><text transform="translate(17.5,650.6) rotate(-90)" font-family="Liberation Sans" font-size="10" text-anchor="middle" fill="#000">21</text><rect x="13.5" y="657.3" width="1" height="1" fill="#000"/><rect x="12" y="664.5" width="4" height="1" fill="#000"/><rect x="13.5" y="671.6" width="1" height="1" fill="#000"/><text transform="translate(17.5,679.3) rotate(-90)" font-family="Liberation Sans" font-size="10" text-anchor="middle" fill="#000">22</text><rect x="13.5" y="686.0" width="1" height="1" fill="#000"/><rect x="12" y="693.1" width="4" height="1" fill="#000"/><rect x="13.5" y="700.3" width="1" height="1" fill="#000"/><text transform="translate(17.5,707.9) rotate(-90)" font-family="Liberation Sans" font-size="10" text-anchor="middle" fill="#000">23</text><rect x="13.5" y="714.6" width="1" height="1" fill="#000"/><rect x="12" y="721.8" width="4" height="1" fill="#000"/><rect x="13.5" y="728.9" width="1" height="1" fill="#000"/><text transform="translate(17.5,736.6) rotate(-90)" font-family="Liberation Sans" font-size="10" text-anchor="middle" fill="#000">24</text><rect x="13.5" y="743.3" width="1" height="1" fill="#000"/><rect x="12" y="750.4" width="4" height="1" fill="#000"/><rect x="13.5" y="757.6" width="1" height="1" fill="#000"/><text transform="translate(17.5,765.2) rotate(-90)" font-family="Liberation Sans" font-size="10" text-anchor="middle" fill="#000">25</text><rect x="13.5" y="771.9" width="1" height="1" fill="#000"/><rect x="12" y="779.1" width="4" height="1" fill="#000"/><rect x="13.5" y="786.2" width="1" height="1" fill="#000"/><text transform="translate(17.5,793.9) rotate(-90)" font-family="Liberation Sans" font-size="10" text-anchor="middle" fill="#000">26</text></svg>
<div style="position:absolute;left:1261px;top:104px;width:19px;height:824px;background:#f4f3ee;"></div>
<div style="position:absolute;left:1278px;top:104px;width:2px;height:870px;background:#e6ecf6;"></div>
<div style="position:absolute;left:1262px;top:104px;width:16px;height:6px;background:#f5efe0;border-bottom:2px solid #000;"></div>
<div style="position:absolute;left:1263px;top:111px;width:14px;height:15px;border-radius:2px;background:linear-gradient(135deg,#dbe6fd,#b8cdf9);border:1px solid #fff;box-shadow:0 0 0 1px #b5c8ee;"></div>
<svg style="position:absolute;left:0;top:0" width="1280" height="1024" viewBox="0 0 1280 1024"><path d="M1266.0 120.5 L1270.0 116.5 L1274.0 120.5" fill="none" stroke="#4d6185" stroke-width="2"/></svg>
<div style="position:absolute;left:1262px;top:142px;width:15px;height:333px;border-radius:2px;background:linear-gradient(to right,#c9d9fd,#bccffb);border:1px solid #fff;box-shadow:0 0 0 1px #a9bfec;"></div>
<div style="position:absolute;left:1266px;top:303px;width:7px;height:1px;background:#8da6dc;"></div>
<div style="position:absolute;left:1266px;top:305px;width:7px;height:1px;background:#8da6dc;"></div>
<div style="position:absolute;left:1266px;top:307px;width:7px;height:1px;background:#8da6dc;"></div>
<div style="position:absolute;left:1266px;top:309px;width:7px;height:1px;background:#8da6dc;"></div>
<div style="position:absolute;left:1263px;top:861px;width:14px;height:15px;border-radius:2px;background:linear-gradient(135deg,#dbe6fd,#b8cdf9);border:1px solid #fff;box-shadow:0 0 0 1px #b5c8ee;"></div>
<svg style="position:absolute;left:0;top:0" width="1280" height="1024" viewBox="0 0 1280 1024"><path d="M1266.0 866.5 L1270.0 870.5 L1274.0 866.5" fill="none" stroke="#4d6185" stroke-width="2"/></svg>
<svg style="position:absolute;left:1262px;top:880px" width="16" height="46">
<path d="M5 6 L8 3 L11 6Z M5 9 L8 6 L11 9Z" fill="#000"/>
<circle cx="8" cy="22.5" r="3" fill="#9a9a9a" stroke="#333" stroke-width="0.8"/><circle cx="7" cy="21.5" r="1.1" fill="#eee"/>
<path d="M5 37 L8 40 L11 37Z M5 40 L8 43 L11 40Z" fill="#000"/></svg>
<div style="position:absolute;left:0px;top:928px;width:1280px;height:17px;background:#efece2;"></div>
<div style="position:absolute;left:36px;top:928px;width:17px;height:17px;background:linear-gradient(#ffd7a0,#ffb46a);border:1px solid #2a3a7a;"></div>
<svg style="position:absolute;left:0;top:928px" width="90" height="17">
<path d="M5 4.5 H14 M5 6.5 H14 M5 8.5 H14 M5 10.5 H14 M5 12.5 H14" stroke="#000"/>
<rect x="22.5" y="5.5" width="8" height="6" fill="#fff" stroke="#000"/><circle cx="29" cy="11" r="2.5" fill="#000"/>
<rect x="39.5" y="4.5" width="10" height="8" fill="#fff" stroke="#000"/><path d="M42 7.5 H47 M42 9.5 H47" stroke="#000"/>
<path d="M56 4.5 H66 M58 7.5 H66 M58 10.5 H66 M56 13 H66" stroke="#000" stroke-dasharray="2 1"/>
<path d="M71.5 4.5 Q74 3 77 4.5 Q80 3 82.5 4.5 V13 Q80 11.5 77 13 Q74 11.5 71.5 13Z" fill="#fff" stroke="#000"/><path d="M77 4.5 V13" stroke="#000"/>
</svg>
<div style="position:absolute;left:88px;top:929px;width:14px;height:15px;border-radius:2px;background:linear-gradient(135deg,#dbe6fd,#b8cdf9);border:1px solid #fff;box-shadow:0 0 0 1px #b5c8ee;"></div>
<svg style="position:absolute;left:0;top:0" width="1280" height="1024" viewBox="0 0 1280 1024"><path d="M97.0 932.5 L93.0 936.5 L97.0 940.5" fill="none" stroke="#4d6185" stroke-width="2"/></svg>
<div style="position:absolute;left:104px;top:929px;width:1139px;height:15px;border-radius:2px;background:linear-gradient(to bottom,#c9d9fd,#bccffb);border:1px solid #fff;box-shadow:0 0 0 1px #a9bfec;"></div>
<div style="position:absolute;left:671px;top:933px;width:1px;height:7px;background:#8da6dc;"></div>
<div style="position:absolute;left:673px;top:933px;width:1px;height:7px;background:#8da6dc;"></div>
<div style="position:absolute;left:675px;top:933px;width:1px;height:7px;background:#8da6dc;"></div>
<div style="position:absolute;left:677px;top:933px;width:1px;height:7px;background:#8da6dc;"></div>
<div style="position:absolute;left:1245px;top:929px;width:14px;height:15px;border-radius:2px;background:linear-gradient(135deg,#dbe6fd,#b8cdf9);border:1px solid #fff;box-shadow:0 0 0 1px #b5c8ee;"></div>
<svg style="position:absolute;left:0;top:0" width="1280" height="1024" viewBox="0 0 1280 1024"><path d="M1250.0 932.5 L1254.0 936.5 L1250.0 940.5" fill="none" stroke="#4d6185" stroke-width="2"/></svg>
<div style="position:absolute;left:1261px;top:928px;width:19px;height:17px;background:#efece2;"></div>
<div style="position:absolute;left:0px;top:945px;width:1280px;height:29px;background:linear-gradient(to right,#a6c2f3 0px,#bdd2f8 250px,#c4d8f9 700px,#c6daf9 1280px);"></div>
<div style="position:absolute;left:0px;top:945px;width:1280px;height:2px;background:#e8eefa;"></div>
<div class="tb" style="left:3px;top:947px;width:655px;height:26px;"></div>
<div class="grip" style="left:6px;top:952px"></div>
<div class="grip" style="left:6px;top:956px"></div>
<div class="grip" style="left:6px;top:960px"></div>
<div class="grip" style="left:6px;top:964px"></div>
<div style="position:absolute;left:646px;top:947px;width:12px;height:26px;border-radius:0 3px 3px 0;background:linear-gradient(to bottom,#7aa6f0,#3a63c8 60%,#1f3f9e);"></div>
<svg style="position:absolute;left:648px;top:964px" width="8" height="7"><path d="M1 0.5 H7" stroke="#fff" stroke-width="1"/><path d="M1 2.5 H7 L4 5.5Z" fill="#fff"/></svg>
<div style="position:absolute;left:13px;top:954px;white-space:nowrap;font-size:10px;"><u style="text-decoration:none;border-bottom:1px solid #000">D</u>essiner</div>
<svg class="ico" style="left:55px;top:957px" width="8" height="5"><path d="M0.5 0 H7.5 L4 4Z" fill="#000"/></svg>
<svg class="ico" style="left:71px;top:952px" width="14" height="17"><path d="M2.5 1.5 V13 L5.5 10.5 L8 15.5 L10 14.5 L7.5 9.5 H11.5Z" fill="#fff" stroke="#445"/></svg>
<div class="sep" style="left:92px;top:951px"></div>
<div style="position:absolute;left:98px;top:954px;white-space:nowrap;font-size:10.5px;">Fo<u style="text-decoration:none;border-bottom:1px solid #000">r</u>mes automatiques</div>
<svg class="ico" style="left:203px;top:957px" width="8" height="5"><path d="M0.5 0 H7.5 L4 4Z" fill="#000"/></svg>
<svg class="ico" style="left:217px;top:952px" width="16" height="16" viewBox="0 0 16 16"><path d="M2 2 L14 14" stroke="#000" stroke-width="1.2"/></svg>
<svg class="ico" style="left:241px;top:952px" width="16" height="16" viewBox="0 0 16 16"><path d="M2 2 L12 12" stroke="#000" stroke-width="1.4"/><path d="M14 14 L8 12.5 L12.5 8Z" fill="#000"/></svg>
<svg class="ico" style="left:263px;top:952px" width="16" height="16" viewBox="0 0 16 16"><rect x="0.5" y="3.5" width="15" height="10" fill="#fff" stroke="#000"/></svg>
<svg class="ico" style="left:287px;top:952px" width="16" height="16" viewBox="0 0 16 16"><ellipse cx="8" cy="8.5" rx="7.5" ry="5" fill="#fff" stroke="#000"/></svg>
<svg class="ico" style="left:309px;top:952px" width="16" height="16" viewBox="0 0 16 16"><rect x="1.5" y="2.5" width="13" height="11" fill="#fff" stroke="#556"/><text x="2.5" y="9" font-size="7" font-family="Liberation Sans" font-weight="bold">A</text><path d="M8 5.5 H13 M8 8 H13 M3 11 H13" stroke="#445"/></svg>
<svg class="ico" style="left:333px;top:952px" width="16" height="16" viewBox="0 0 16 16"><text x="1" y="14" font-size="15" font-family="Liberation Serif" font-style="italic" font-weight="bold" fill="#3a6ad8">A</text></svg>
<svg class="ico" style="left:355px;top:952px" width="16" height="16" viewBox="0 0 16 16"><circle cx="8" cy="3" r="2" fill="#3a6ad8"/><circle cx="3" cy="11" r="2" fill="#d84a3a"/><circle cx="13" cy="11" r="2" fill="#3aa83a"/><circle cx="8" cy="8.5" r="5.5" fill="none" stroke="#777" stroke-dasharray="2 2"/></svg>
<svg class="ico" style="left:378px;top:952px" width="16" height="16" viewBox="0 0 16 16"><rect x="1.5" y="1.5" width="13" height="13" fill="#f4e6cc" stroke="#776"/><circle cx="8" cy="6" r="3" fill="#c8703a"/><path d="M3 14 Q8 8 13 14Z" fill="#4a6ab0"/></svg>
<svg class="ico" style="left:402px;top:952px" width="16" height="16" viewBox="0 0 16 16"><rect x="1.5" y="1.5" width="13" height="13" fill="#fff" stroke="#556"/><path d="M2 14 L7 7 L10 11 L12 9 L14 14Z" fill="#4a8a4a"/><circle cx="11" cy="4.5" r="1.6" fill="#d33"/></svg>
<svg class="ico" style="left:431px;top:952px" width="16" height="16" viewBox="0 0 16 16"><path d="M3 7 L8 2 L13 7 L8 12Z" fill="#fff" stroke="#333"/><path d="M13 7 Q15 10 14 11" stroke="#3a6ad8" stroke-width="1.5" fill="none"/><rect x="0" y="12" width="16" height="4" fill="#ffff00"/></svg>
<svg class="ico" style="left:465px;top:952px" width="16" height="16" viewBox="0 0 16 16"><path d="M3 11 L13 2" stroke="#3a6ad8" stroke-width="2.5"/><rect x="0" y="12" width="16" height="4" fill="#0000ff"/></svg>
<svg class="ico" style="left:499px;top:952px" width="16" height="16" viewBox="0 0 16 16"><text x="3" y="11" font-size="13" font-family="Liberation Serif" font-weight="bold" fill="#2a3a90">A</text><rect x="0" y="12" width="16" height="4" fill="#000"/></svg>
<svg class="ico" style="left:532px;top:952px" width="16" height="16" viewBox="0 0 16 16"><rect x="1" y="4" width="14" height="1" fill="#000"/><rect x="1" y="7" width="14" height="2" fill="#000"/><rect x="1" y="11" width="14" height="3" fill="#000"/></svg>
<svg class="ico" style="left:555px;top:952px" width="16" height="16" viewBox="0 0 16 16"><path d="M1 4.5 H15 M1 8.5 H15 M1 12.5 H15" stroke="#000" stroke-dasharray="2 1"/></svg>
<svg class="ico" style="left:578px;top:952px" width="16" height="16" viewBox="0 0 16 16"><path d="M1 5 H15 M12 2 L15 5 L12 8 M15 11 H1 M4 8 L1 11 L4 14" fill="none" stroke="#000" stroke-width="1.3"/></svg>
<svg class="ico" style="left:601px;top:952px" width="16" height="16" viewBox="0 0 16 16"><rect x="3" y="3" width="12" height="12" fill="#3a6a2a"/><rect x="1" y="1" width="11" height="11" fill="#5cb84a" stroke="#2a5a1a"/></svg>
<svg class="ico" style="left:623px;top:952px" width="16" height="16" viewBox="0 0 16 16"><path d="M1.5 4.5 L4.5 1.5 H14.5 V11.5 L11.5 14.5 H1.5Z" fill="#7ac864" stroke="#2a5a1a"/><path d="M1.5 4.5 H11.5 V14.5 M11.5 4.5 L14.5 1.5" fill="none" stroke="#2a5a1a"/></svg>
<div class="sep" style="left:425px;top:952px"></div>
<svg class="ico" style="left:451px;top:952px" width="8" height="16" viewBox="0 0 8 16"><path d="M1 7 H7 L4 10Z" fill="#000"/></svg>
<svg class="ico" style="left:485px;top:952px" width="8" height="16" viewBox="0 0 8 16"><path d="M1 7 H7 L4 10Z" fill="#000"/></svg>
<svg class="ico" style="left:519px;top:952px" width="8" height="16" viewBox="0 0 8 16"><path d="M1 7 H7 L4 10Z" fill="#000"/></svg>
<div style="position:absolute;left:0px;top:973px;width:1280px;height:21px;background:#ece9d8;border-top:1px solid #fff;"></div>
<div style="position:absolute;left:10px;top:978px;white-space:nowrap;font-size:11px;">Page</div>
<div style="position:absolute;left:41px;top:978px;white-space:nowrap;font-size:11px;">1</div>
<div style="position:absolute;left:78px;top:978px;white-space:nowrap;font-size:11px;">Sec</div>
<div style="position:absolute;left:102px;top:978px;white-space:nowrap;font-size:11px;">1</div>
<div style="position:absolute;left:154px;top:978px;white-space:nowrap;font-size:11px;">1/2</div>
<div style="position:absolute;left:202px;top:978px;white-space:nowrap;font-size:11px;">À</div>
<div style="position:absolute;left:214.5px;top:978px;white-space:nowrap;font-size:11px;">17,1</div>
<div style="position:absolute;left:239px;top:978px;white-space:nowrap;font-size:11px;">cm</div>
<div style="position:absolute;left:260px;top:978px;white-space:nowrap;font-size:11px;">Li</div>
<div style="position:absolute;left:273px;top:978px;white-space:nowrap;font-size:11px;">31</div>
<div style="position:absolute;left:299.5px;top:978px;white-space:nowrap;font-size:11px;">Col</div>
<div style="position:absolute;left:321px;top:978px;white-space:nowrap;font-size:11px;">1</div>
<div style="position:absolute;left:0px;top:975px;width:192px;height:19px;border:1px solid;border-color:#d2cebd #fbfaf5 #fbfaf5 #d2cebd;"></div>
<div style="position:absolute;left:198px;top:975px;width:153px;height:19px;border:1px solid;border-color:#d2cebd #fbfaf5 #fbfaf5 #d2cebd;"></div>
<div style="position:absolute;left:357px;top:975px;width:27px;height:19px;border:1px solid;border-color:#d2cebd #fbfaf5 #fbfaf5 #d2cebd;"></div>
<div style="position:absolute;left:388px;top:975px;width:25px;height:19px;border:1px solid;border-color:#d2cebd #fbfaf5 #fbfaf5 #d2cebd;"></div>
<div style="position:absolute;left:418px;top:975px;width:25px;height:19px;border:1px solid;border-color:#d2cebd #fbfaf5 #fbfaf5 #d2cebd;"></div>
<div style="position:absolute;left:447px;top:975px;width:25px;height:19px;border:1px solid;border-color:#d2cebd #fbfaf5 #fbfaf5 #d2cebd;"></div>
<div style="position:absolute;left:477px;top:975px;width:64px;height:19px;border:1px solid;border-color:#d2cebd #fbfaf5 #fbfaf5 #d2cebd;"></div>
<div style="position:absolute;left:547px;top:975px;width:42px;height:19px;border:1px solid;border-color:#d2cebd #fbfaf5 #fbfaf5 #d2cebd;"></div>
<div style="position:absolute;left:596px;top:975px;width:37px;height:19px;border:1px solid;border-color:#d2cebd #fbfaf5 #fbfaf5 #d2cebd;"></div>
<div style="position:absolute;left:638px;top:975px;width:27px;height:19px;border:1px solid;border-color:#d2cebd #fbfaf5 #fbfaf5 #d2cebd;"></div>
<div style="position:absolute;left:670px;top:975px;width:29px;height:19px;border:1px solid;border-color:#d2cebd #fbfaf5 #fbfaf5 #d2cebd;"></div>
<div style="position:absolute;left:359px;top:978px;white-space:nowrap;font-size:11px;color:#a9a698;">ENR</div>
<div style="position:absolute;left:389px;top:978px;white-space:nowrap;font-size:11px;color:#a9a698;">REV</div>
<div style="position:absolute;left:419px;top:978px;white-space:nowrap;font-size:11px;color:#a9a698;">EXT</div>
<div style="position:absolute;left:448px;top:978px;white-space:nowrap;font-size:11px;color:#a9a698;">RFP</div>
<div style="position:absolute;left:478px;top:978px;white-space:nowrap;font-size:11px;">Français (Fr</div>
<svg class="ico" style="left:557px;top:976px" width="22" height="16"><path d="M1.5 3.5 Q5 2 8 3.5 Q11 2 14.5 3.5 V13 Q11 11.5 8 13 Q5 11.5 1.5 13Z" fill="#fff" stroke="#333"/><path d="M10 6 L17 13 M17 6 L10 13" stroke="#d02020" stroke-width="2"/></svg>
<div style="position:absolute;left:0px;top:994px;width:1280px;height:30px;background:linear-gradient(to bottom,#3a80f3 0px,#6aa0f8 1px,#3f84f4 3px,#2a68e0 8px,#245edb 20px,#2558d0 27px,#1d48b8 30px);"></div>
<div style="position:absolute;left:0px;top:994px;width:135px;height:30px;border-radius:0 12px 8px 0;background:linear-gradient(to bottom,#2e7d2e 0px,#5cb85c 1px,#4aaa4a 3px,#3d9c3d 8px,#389838 20px,#318a31 27px,#2a7a2a 30px);box-shadow:inset -3px 0 4px rgba(0,40,0,0.35);"></div>
<svg style="position:absolute;left:10px;top:999px" width="20" height="20" viewBox="0 0 20 20">
<path d="M2 3 Q5 1.5 9 3 V9 Q5 7.5 2 9Z" fill="#f25a2a"/><path d="M10 3.2 Q14 4.5 18 3 V9 Q14 10.5 10 9.2Z" fill="#6ac43a"/>
<path d="M2 10 Q5 8.5 9 10 V16 Q5 14.5 2 16Z" fill="#3a8ae8"/><path d="M10 10.2 Q14 11.5 18 10 V16 Q14 17.5 10 16.2Z" fill="#f8c82a"/></svg>
<div style="position:absolute;left:34px;top:998px;white-space:nowrap;font-size:18px;font-weight:bold;font-style:italic;color:#fff;text-shadow:1px 1px 1px #1a4a1a;">démarrer</div>
<svg class="ico" style="left:147px;top:1001px" width="16" height="16" viewBox="0 0 16 16"><rect x="2" y="3" width="12" height="11" rx="1" fill="#dfeafc" stroke="#2a4fa0"/><rect x="3" y="4" width="10" height="3" fill="#5a8ae0"/><path d="M7 13 L13 6" stroke="#334" stroke-width="1.5"/></svg>
<svg class="ico" style="left:170px;top:1001px" width="16" height="16" viewBox="0 0 16 16"><text x="2.5" y="14" font-family="Liberation Sans" font-weight="bold" font-size="16" fill="#9ad0ff" stroke="#1a3a90" stroke-width="0.8">e</text><ellipse cx="8" cy="8.5" rx="7.5" ry="3.5" transform="rotate(-35 8 8.5)" fill="none" stroke="#e8c040" stroke-width="1.2"/></svg>
<svg class="ico" style="left:194px;top:1001px" width="16" height="16" viewBox="0 0 16 16"><circle cx="8" cy="8" r="7" fill="#e8e8ee" stroke="#8a8a9a" stroke-width="0.8"/><circle cx="8" cy="8" r="4" fill="none" stroke="#d0c8b0" stroke-width="1"/><circle cx="8" cy="8" r="1.8" fill="#9aa0b0"/></svg>
<svg class="ico" style="left:216px;top:1001px" width="16" height="16" viewBox="0 0 16 16"><circle cx="8" cy="8" r="7" fill="#e8e8ee" stroke="#8a8a9a" stroke-width="0.8"/><circle cx="8" cy="8" r="4" fill="none" stroke="#d0c8b0" stroke-width="1"/><circle cx="8" cy="8" r="1.8" fill="#9aa0b0"/></svg>
<svg class="ico" style="left:240px;top:1001px" width="16" height="16" viewBox="0 0 16 16"><path d="M1 4 H6 L7.5 5.5 H14 V14 H1Z" fill="#e8b84a" stroke="#8a6a20" stroke-width="0.7"/><path d="M2 7 H15 L13.5 14 H1Z" fill="#f6d872"/><circle cx="7" cy="9" r="2.5" fill="#cfe6ff" stroke="#446" stroke-width="0.8"/></svg>
<svg class="ico" style="left:263px;top:1001px" width="16" height="16" viewBox="0 0 16 16"><rect x="1" y="1" width="14" height="14" fill="#fbe3b0" stroke="#d08a3a"/><circle cx="8" cy="8" r="4.5" fill="#fff" stroke="#d08030" stroke-width="1.2"/><path d="M8 5 V8 H10" stroke="#c05020" fill="none"/></svg>
<svg class="ico" style="left:286px;top:1001px" width="16" height="16" viewBox="0 0 16 16"><rect x="1" y="1" width="14" height="14" fill="#f6c8a8" stroke="#b04a2a"/><circle cx="7" cy="9" r="3.5" fill="#d8402a"/><path d="M11 5 H14 M11 8 H14" stroke="#444"/></svg>
<svg class="ico" style="left:308px;top:1001px" width="16" height="16" viewBox="0 0 16 16"><rect x="1" y="1" width="14" height="14" fill="#f4f7ff" stroke="#9ab0d8"/><text x="1.5" y="13" font-family="Liberation Serif" font-weight="bold" font-style="italic" font-size="12" fill="#2a50c0">W</text></svg>
<svg class="ico" style="left:332px;top:1001px" width="16" height="16" viewBox="0 0 16 16"><rect x="1" y="1" width="14" height="14" fill="#f2fbf2" stroke="#8ac88a"/><text x="3" y="13" font-family="Liberation Sans" font-weight="bold" font-size="12" fill="#1a8a2a">X</text></svg>
<svg class="ico" style="left:354px;top:1001px" width="16" height="16" viewBox="0 0 16 16"><circle cx="8" cy="8.5" r="6.5" fill="#4a48c8" stroke="#2a2a7a" stroke-width="0.6"/><circle cx="6" cy="6" r="1.6" fill="#f0c040"/><circle cx="10" cy="6.5" r="1.6" fill="#e04a4a"/><path d="M4 13 V9 H8 V13 M8.5 13 V9.5 H12 V13" fill="#3ab04a"/></svg>
<svg class="ico" style="left:378px;top:1001px" width="16" height="16" viewBox="0 0 16 16"><rect x="1" y="2" width="12" height="12" fill="#3a6ae0" stroke="#1a2a70"/><path d="M3 6 H15 V14 H3Z" fill="#f0c020" stroke="#7a5a10" stroke-width="0.8"/></svg>
<div style="position:absolute;left:415px;top:997px;width:129px;height:25px;border-radius:3px;background:linear-gradient(to bottom,#5a9af8 0px,#3c81f3 3px,#3a7cf0 20px,#3470e6 100%);border:1px solid #2a5cd0;"></div>
<div style="position:absolute;left:445px;top:1003px;white-space:nowrap;font-size:10.5px;color:#fff;">SAP Logon 710</div>
<div style="position:absolute;left:547px;top:997px;width:130px;height:25px;border-radius:3px;background:linear-gradient(to bottom,#5a9af8 0px,#3c81f3 3px,#3a7cf0 20px,#3470e6 100%);border:1px solid #2a5cd0;"></div>
<div style="position:absolute;left:577px;top:1003px;white-space:nowrap;font-size:10.5px;color:#fff;">Accès simplifié ...</div>
<div style="position:absolute;left:678px;top:997px;width:128px;height:25px;border-radius:3px;background:linear-gradient(to bottom,#5a9af8 0px,#3c81f3 3px,#3a7cf0 20px,#3470e6 100%);border:1px solid #2a5cd0;"></div>
<div style="position:absolute;left:708px;top:1003px;white-space:nowrap;font-size:10.5px;color:#fff;">S:\BLOIS USIN...</div>
<div style="position:absolute;left:808px;top:997px;width:129px;height:25px;border-radius:3px;background:linear-gradient(to bottom,#5a9af8 0px,#3c81f3 3px,#3a7cf0 20px,#3470e6 100%);border:1px solid #2a5cd0;"></div>
<div style="position:absolute;left:838px;top:1003px;white-space:nowrap;font-size:10.5px;color:#fff;">Forum FS Gene...</div>
<div style="position:absolute;left:939px;top:997px;width:131px;height:25px;border-radius:3px;background:linear-gradient(to bottom,#1e4fb8,#2a5fd0 50%,#2356c4);border:1px solid #1a3f9a;"></div>
<div style="position:absolute;left:969px;top:1003px;white-space:nowrap;font-size:10.5px;color:#fff;">Doc1.doc - Micr...</div>
<svg class="ico" style="left:425px;top:1001px" width="16" height="16" viewBox="0 0 16 16"><rect x="1" y="2" width="12" height="12" fill="#3a6ae0" stroke="#1a2a70"/><path d="M3 6 H15 V14 H3Z" fill="#f0c020" stroke="#7a5a10" stroke-width="0.8"/></svg>
<svg class="ico" style="left:556px;top:1001px" width="16" height="16" viewBox="0 0 16 16"><rect x="1.5" y="1.5" width="13" height="13" fill="#eef5ee" stroke="#2a6a2a"/><rect x="1.5" y="1.5" width="13" height="3" fill="#3a9a3a"/><rect x="4" y="7" width="8" height="2" fill="#e0c060"/><rect x="4" y="10" width="8" height="2" fill="#e0c060"/></svg>
<svg class="ico" style="left:687px;top:1001px" width="16" height="16" viewBox="0 0 16 16"><path d="M1 4 H6 L7.5 5.5 H14 V14 H1Z" fill="#e8b84a" stroke="#8a6a20" stroke-width="0.7"/><path d="M2 7 H15 L13.5 14 H1Z" fill="#f6d872"/><circle cx="7" cy="9" r="2.5" fill="#cfe6ff" stroke="#446" stroke-width="0.8"/></svg>
<svg class="ico" style="left:817px;top:1001px" width="16" height="16" viewBox="0 0 16 16"><text x="2.5" y="14" font-family="Liberation Sans" font-weight="bold" font-size="16" fill="#9ad0ff" stroke="#1a3a90" stroke-width="0.8">e</text><ellipse cx="8" cy="8.5" rx="7.5" ry="3.5" transform="rotate(-35 8 8.5)" fill="none" stroke="#e8c040" stroke-width="1.2"/></svg>
<svg class="ico" style="left:948px;top:1001px" width="16" height="16" viewBox="0 0 16 16"><rect x="1" y="1" width="14" height="14" fill="#f4f7ff" stroke="#9ab0d8"/><text x="1.5" y="13" font-family="Liberation Serif" font-weight="bold" font-style="italic" font-size="12" fill="#2a50c0">W</text></svg>
<div style="position:absolute;left:1080px;top:1003px;white-space:nowrap;font-size:11px;color:#fff;">FR</div>
<div style="position:absolute;left:1115px;top:994px;width:165px;height:30px;background:linear-gradient(to bottom,#1aa0f8 0px,#14a0f8 2px,#0d8ff0 10px,#0c87e8 25px,#0a70d8 30px);border-left:1px solid #0a4ab8;"></div>
<svg class="ico" style="left:1126px;top:1000px" width="16" height="16" viewBox="0 0 16 16"><rect x="1" y="1" width="8" height="8" fill="#3a70c0"/><path d="M2 5 H14 L15 14 H1Z" fill="#f0c020" stroke="#7a5a10" stroke-width="0.6"/><path d="M9 9 L14 3" stroke="#4aa0ff" stroke-width="1.4"/></svg>
<svg class="ico" style="left:1142px;top:1000px" width="16" height="16" viewBox="0 0 16 16"><rect x="5" y="1" width="9" height="7" fill="#5a7ad8" stroke="#223"/><rect x="1" y="6" width="9" height="7" fill="#6a8ae8" stroke="#223"/><rect x="3" y="13" width="5" height="2" fill="#ccd"/></svg>
<svg class="ico" style="left:1162px;top:1000px" width="16" height="16" viewBox="0 0 16 16"><circle cx="7" cy="7" r="5.5" fill="#8a8a90" stroke="#445"/><circle cx="5.5" cy="5.5" r="2" fill="#d8d8e0"/><circle cx="11" cy="11" r="4" fill="#e83030" stroke="#fff" stroke-width="0.8"/><path d="M9 11 H13" stroke="#fff" stroke-width="1.4"/></svg>
<svg class="ico" style="left:1180px;top:1000px" width="16" height="16" viewBox="0 0 16 16"><path d="M1.5 2 H14.5 V8 Q14 13 8 15.5 Q2 13 1.5 8Z" fill="#c42a2a" stroke="#eee" stroke-width="0.8"/><path d="M4 11 V5 L8 9 L12 5 V11" fill="none" stroke="#fff" stroke-width="2"/></svg>
<svg class="ico" style="left:1198px;top:1000px" width="16" height="16" viewBox="0 0 16 16"><rect x="0.5" y="0.5" width="15" height="15" rx="2" fill="#3a3020"/><path d="M2 14 A3 3 0 0 1 5 11 M2 14 A7 7 0 0 1 9 7 M2 14 A11 11 0 0 1 13 3" fill="none" stroke="#e8d8b8" stroke-width="1.6"/></svg>
<svg class="ico" style="left:1216px;top:1000px" width="16" height="16" viewBox="0 0 16 16"><rect x="0.5" y="0.5" width="15" height="15" fill="#1a2a8a" stroke="#8aa8e8"/><rect x="3" y="3" width="10" height="10" fill="#2a3aa8"/><circle cx="9" cy="7" r="1" fill="#8ab0ff"/><circle cx="7" cy="9" r="1" fill="#8ab0ff"/></svg>
<div style="position:absolute;left:1239px;top:1003px;white-space:nowrap;font-size:11px;color:#fff;">19:02</div>
<svg style="position:absolute;left:0;top:0" width="1280" height="1024" viewBox="0 0 1280 1024"><rect x="348.5" y="496.5" width="584" height="346" fill="none" stroke="#ebb15c" stroke-width="1" stroke-dasharray="4 3"/><rect x="348.5" y="140.5" width="110" height="64" fill="#fff" stroke="#000" stroke-width="1" /><text x="403.15" y="156" font-family="Liberation Serif" font-size="12" font-weight="bold" fill="#000" text-anchor="middle" >Chambre 1</text><circle cx="372.1" cy="190.6" r="4.8" fill="#ff22ff"/><circle cx="389.9" cy="190.6" r="4.8" fill="#e80000"/><circle cx="408.2" cy="190.6" r="4.8" fill="#10e010"/><circle cx="426.5" cy="190.6" r="4.8" fill="#0010e0"/><rect x="467.5" y="140.5" width="110" height="64" fill="#fff" stroke="#000" stroke-width="1" /><text x="522.35" y="156" font-family="Liberation Serif" font-size="12" font-weight="bold" fill="#000" text-anchor="middle" >Chambre 2</text><circle cx="490.2" cy="190.6" r="4.8" fill="#ff22ff"/><circle cx="508.5" cy="190.6" r="4.8" fill="#e80000"/><circle cx="526.8" cy="190.6" r="4.8" fill="#10e010"/><circle cx="545.1" cy="190.6" r="4.8" fill="#0010e0"/><rect x="586.5" y="140.5" width="110" height="64" fill="#fff" stroke="#000" stroke-width="1" /><text x="640.8" y="156" font-family="Liberation Serif" font-size="12" font-weight="bold" fill="#000" text-anchor="middle" >Chambre 3</text><circle cx="609" cy="190.6" r="4.8" fill="#ff22ff"/><circle cx="627.3" cy="190.6" r="4.8" fill="#e80000"/><circle cx="645.6" cy="190.6" r="4.8" fill="#10e010"/><circle cx="663.9" cy="190.6" r="4.8" fill="#0010e0"/><rect x="704.5" y="140.5" width="111" height="64" fill="#fff" stroke="#000" stroke-width="1" /><text x="759.5" y="156" font-family="Liberation Serif" font-size="12" font-weight="bold" fill="#000" text-anchor="middle" >Cuisine</text><circle cx="754.8" cy="190.6" r="4.8" fill="#10e010"/><rect x="823.5" y="140.5" width="108" height="64" fill="#fff" stroke="#000" stroke-width="1" /><text x="878.0" y="156" font-family="Liberation Serif" font-size="12" font-weight="bold" fill="#000" text-anchor="middle" >Séjour</text><circle cx="836.9" cy="190.6" r="4.8" fill="#ff22ff"/><circle cx="855.1" cy="190.6" r="4.8" fill="#e80000"/><circle cx="873.7" cy="190.6" r="4.8" fill="#10e010"/><circle cx="891.9" cy="190.6" r="4.8" fill="#0010e0"/><circle cx="910.2" cy="190.6" r="4.8" fill="#0010e0"/><polyline points="367.5,204.5 367.5,514.5" fill="none" stroke="#c42ccc" stroke-width="1"/><polyline points="376.5,204.5 376.5,286.5 759.5,286.5 759.5,432.5 713.5,432.5 713.5,514.5" fill="none" stroke="#3ccf3c" stroke-width="1"/><polyline points="385.5,204.5 385.5,258.5 650.5,258.5 650.5,395.5 604.5,395.5 604.5,514.5" fill="none" stroke="#c42a30" stroke-width="1"/><polyline points="394.5,204.5 394.5,213.5 513.5,213.5 513.5,350.5 467.5,350.5 467.5,514.5" fill="none" stroke="#4a6cc0" stroke-width="1"/><polyline points="494.5,204.5 494.5,276.5 786.5,276.5 786.5,441.5 741.5,441.5 741.5,514.5" fill="none" stroke="#3ccf3c" stroke-width="1"/><polyline points="504.5,204.5 504.5,249.5 677.5,249.5 677.5,404.5 631.5,404.5 631.5,514.5" fill="none" stroke="#c42a30" stroke-width="1"/><polyline points="522.5,204.5 522.5,295.5 385.5,295.5 385.5,514.5" fill="none" stroke="#c42ccc" stroke-width="1"/><polyline points="531.5,204.5 531.5,213.5 540.5,213.5 540.5,359.5 494.5,359.5 494.5,514.5" fill="none" stroke="#4a6cc0" stroke-width="1"/><polyline points="604.5,204.5 604.5,303.5 403.5,303.5 403.5,514.5" fill="none" stroke="#c42ccc" stroke-width="1"/><polyline points="613.5,204.5 613.5,268.5 814.5,268.5 814.5,450.5 768.5,450.5 768.5,514.5" fill="none" stroke="#3ccf3c" stroke-width="1"/><polyline points="622.5,204.5 622.5,213.5 567.5,213.5 567.5,368.5 522.5,368.5 522.5,514.5" fill="none" stroke="#4a6cc0" stroke-width="1"/><polyline points="631.5,204.5 631.5,240.5 704.5,240.5 704.5,414.5 659.5,414.5 659.5,514.5" fill="none" stroke="#c42a30" stroke-width="1"/><polyline points="759.5,204.5 759.5,249.5 841.5,249.5 841.5,459.5 796.5,459.5 796.5,514.5" fill="none" stroke="#3ccf3c" stroke-width="1"/><polyline points="841.5,204.5 841.5,222.5 595.5,222.5 595.5,377.5 549.5,377.5 549.5,514.5" fill="none" stroke="#4a6cc0" stroke-width="1"/><polyline points="850.5,204.5 850.5,231.5 622.5,231.5 622.5,386.5 577.5,386.5 577.5,514.5" fill="none" stroke="#4a6cc0" stroke-width="1"/><polyline points="859.5,204.5 859.5,240.5 732.5,240.5 732.5,423.5 686.5,423.5 686.5,514.5" fill="none" stroke="#c42a30" stroke-width="1"/><polyline points="869.5,204.5 869.5,468.5 823.5,468.5 823.5,514.5" fill="none" stroke="#3ccf3c" stroke-width="1"/><polyline points="878.5,204.5 878.5,313.5 421.5,313.5 421.5,514.5" fill="none" stroke="#c42ccc" stroke-width="1"/><rect x="348.5" y="505.5" width="92" height="45" fill="none" stroke="#c42ccc" stroke-width="1" /><rect x="358.5" y="514.5" width="73" height="18" fill="#fff" stroke="#c42ccc" stroke-width="1" /><line x1="376.5" y1="514" x2="376.5" y2="532" stroke="#c42ccc"/><line x1="394.5" y1="514" x2="394.5" y2="532" stroke="#c42ccc"/><line x1="412.5" y1="514" x2="412.5" y2="532" stroke="#c42ccc"/><text x="367.3" y="527" font-family="Liberation Serif" font-size="10" font-weight="normal" fill="#c42ccc" text-anchor="middle" >1</text><text x="385.35" y="527" font-family="Liberation Serif" font-size="10" font-weight="normal" fill="#c42ccc" text-anchor="middle" >2</text><text x="403.54999999999995" y="527" font-family="Liberation Serif" font-size="10" font-weight="normal" fill="#c42ccc" text-anchor="middle" >3</text><text x="422.04999999999995" y="527" font-family="Liberation Serif" font-size="10" font-weight="normal" fill="#c42ccc" text-anchor="middle" >4</text><text x="396" y="545" font-family="Liberation Serif" font-size="10" font-weight="normal" fill="#c42ccc" text-anchor="middle" >Répartiteur</text><polyline points="394.5,550.5 394.5,852.5" fill="none" stroke="#c42ccc" stroke-width="1"/><text transform="translate(376.5,684) rotate(-90)" font-family="Liberation Serif" font-size="12" fill="#c42ccc">télévision par antenne</text><polyline points="376.3,683 378.7,681 376.3,679 378.7,677 376.3,675 378.7,673 376.3,671 378.7,669 376.3,667 378.7,665 376.3,663 378.7,661 376.3,659 378.7,657 376.3,655 378.7,653 376.3,651 378.7,649 376.3,647 378.7,645 376.3,643 378.7,641 376.3,639" fill="none" stroke="#2ca02c" stroke-width="0.9"/><rect x="458.5" y="514.5" width="456" height="27" fill="#fff" stroke="#000" stroke-width="1" /><line x1="485.5" y1="514" x2="485.5" y2="541" stroke="#000"/><line x1="513.5" y1="514" x2="513.5" y2="541" stroke="#000"/><line x1="540.5" y1="514" x2="540.5" y2="541" stroke="#000"/><line x1="567.5" y1="514" x2="567.5" y2="541" stroke="#000"/><line x1="595.5" y1="514" x2="595.5" y2="541" stroke="#000"/><line x1="622.5" y1="514" x2="622.5" y2="541" stroke="#000"/><line x1="650.5" y1="514" x2="650.5" y2="541" stroke="#000"/><line x1="677.5" y1="514" x2="677.5" y2="541" stroke="#000"/><line x1="704.5" y1="514" x2="704.5" y2="541" stroke="#000"/><line x1="732.5" y1="514" x2="732.5" y2="541" stroke="#000"/><line x1="759.5" y1="514" x2="759.5" y2="541" stroke="#000"/><line x1="786.5" y1="514" x2="786.5" y2="541" stroke="#000"/><line x1="814.5" y1="514" x2="814.5" y2="541" stroke="#000"/><line x1="841.5" y1="514" x2="841.5" y2="541" stroke="#000"/><line x1="859.5" y1="514" x2="859.5" y2="541" stroke="#000"/><line x1="877.5" y1="514" x2="877.5" y2="541" stroke="#000"/><line x1="896.5" y1="514" x2="896.5" y2="541" stroke="#000"/><text x="468.8" y="530" font-family="Liberation Serif" font-size="12" font-weight="normal" fill="#000" text-anchor="middle" >1</text><text x="496.35" y="530" font-family="Liberation Serif" font-size="12" font-weight="normal" fill="#000" text-anchor="middle" >2</text><text x="523.9" y="530" font-family="Liberation Serif" font-size="12" font-weight="normal" fill="#000" text-anchor="middle" >3</text><text x="550.8499999999999" y="530" font-family="Liberation Serif" font-size="12" font-weight="normal" fill="#000" text-anchor="middle" >4</text><text x="578.4" y="530" font-family="Liberation Serif" font-size="12" font-weight="normal" fill="#000" text-anchor="middle" >5</text><text x="605.95" y="530" font-family="Liberation Serif" font-size="12" font-weight="normal" fill="#000" text-anchor="middle" >6</text><text x="633.45" y="530" font-family="Liberation Serif" font-size="12" font-weight="normal" fill="#000" text-anchor="middle" >7</text><text x="661.0" y="530" font-family="Liberation Serif" font-size="12" font-weight="normal" fill="#000" text-anchor="middle" >8</text><text x="687.95" y="530" font-family="Liberation Serif" font-size="12" font-weight="normal" fill="#000" text-anchor="middle" >9</text><text x="718.5" y="530" font-family="Liberation Serif" font-size="12" font-weight="normal" fill="#000" text-anchor="middle" >10</text><text x="746.05" y="530" font-family="Liberation Serif" font-size="12" font-weight="normal" fill="#000" text-anchor="middle" >11</text><text x="773.0" y="530" font-family="Liberation Serif" font-size="12" font-weight="normal" fill="#000" text-anchor="middle" >12</text><text x="800.55" y="530" font-family="Liberation Serif" font-size="12" font-weight="normal" fill="#000" text-anchor="middle" >13</text><text x="827.85" y="530" font-family="Liberation Serif" font-size="12" font-weight="normal" fill="#000" text-anchor="middle" >14</text><text x="850.1" y="525" font-family="Liberation Serif" font-size="8" font-weight="normal" fill="#000" text-anchor="middle" >1</text><text x="850.1" y="536" font-family="Liberation Serif" font-size="8" font-weight="normal" fill="#000" text-anchor="middle" >5</text><text x="868.5" y="525" font-family="Liberation Serif" font-size="8" font-weight="normal" fill="#000" text-anchor="middle" >1</text><text x="868.5" y="536" font-family="Liberation Serif" font-size="8" font-weight="normal" fill="#000" text-anchor="middle" >6</text><text x="887.05" y="525" font-family="Liberation Serif" font-size="8" font-weight="normal" fill="#000" text-anchor="middle" >1</text><text x="887.05" y="536" font-family="Liberation Serif" font-size="8" font-weight="normal" fill="#000" text-anchor="middle" >7</text><text x="905.2" y="525" font-family="Liberation Serif" font-size="8" font-weight="normal" fill="#000" text-anchor="middle" >1</text><text x="905.2" y="536" font-family="Liberation Serif" font-size="8" font-weight="normal" fill="#000" text-anchor="middle" >8</text><polyline points="467.5,540.5 467.5,555.5 458.5,555.5 458.5,569.5" fill="none" stroke="#4a6cc0" stroke-width="1"/><polyline points="494.5,540.5 494.5,555.5 485.5,555.5 485.5,569.5" fill="none" stroke="#4a6cc0" stroke-width="1"/><polyline points="522.5,540.5 522.5,555.5 513.5,555.5 513.5,569.5" fill="none" stroke="#4a6cc0" stroke-width="1"/><polyline points="549.5,540.5 549.5,555.5 540.5,555.5 540.5,569.5" fill="none" stroke="#4a6cc0" stroke-width="1"/><polyline points="577.5,540.5 577.5,555.5 567.5,555.5 567.5,569.5" fill="none" stroke="#4a6cc0" stroke-width="1"/><rect x="440.5" y="569.5" width="191" height="27" fill="#fff" stroke="#4a6cc0" stroke-width="1" /><line x1="467.5" y1="569" x2="467.5" y2="596" stroke="#4a6cc0"/><line x1="494.5" y1="569" x2="494.5" y2="596" stroke="#4a6cc0"/><line x1="522.5" y1="569" x2="522.5" y2="596" stroke="#4a6cc0"/><line x1="549.5" y1="569" x2="549.5" y2="596" stroke="#4a6cc0"/><line x1="577.5" y1="569" x2="577.5" y2="596" stroke="#4a6cc0"/><line x1="604.5" y1="569" x2="604.5" y2="596" stroke="#4a6cc0"/><text x="453.8" y="584.5" font-family="Liberation Serif" font-size="12" font-weight="normal" fill="#1a1a8a" text-anchor="middle" >1</text><text x="480.75" y="584.5" font-family="Liberation Serif" font-size="12" font-weight="normal" fill="#1a1a8a" text-anchor="middle" >2</text><text x="508.25" y="584.5" font-family="Liberation Serif" font-size="12" font-weight="normal" fill="#1a1a8a" text-anchor="middle" >3</text><text x="535.8" y="584.5" font-family="Liberation Serif" font-size="12" font-weight="normal" fill="#1a1a8a" text-anchor="middle" >4</text><text x="563.3499999999999" y="584.5" font-family="Liberation Serif" font-size="12" font-weight="normal" fill="#1a1a8a" text-anchor="middle" >5</text><text x="590.9" y="584.5" font-family="Liberation Serif" font-size="12" font-weight="normal" fill="#1a1a8a" text-anchor="middle" >6</text><text x="617.8499999999999" y="584.5" font-family="Liberation Serif" font-size="12" font-weight="normal" fill="#1a1a8a" text-anchor="middle" >7</text><rect x="504.5" y="596.5" width="63" height="27" fill="#fff" stroke="#4a6cc0" stroke-width="1" /><text x="536" y="612.5" font-family="Liberation Serif" font-size="11.5" font-weight="normal" fill="#1a1a8a" text-anchor="middle" >Switch 1</text><polyline points="540.5,623.5 540.5,678.5 768.5,678.5 768.5,715.5 668.5,715.5" fill="none" stroke="#4a6cc0" stroke-width="1"/><polyline points="604.5,540.5 604.5,560.5 640.5,560.5 640.5,605.5" fill="none" stroke="#c42a30" stroke-width="1"/><polyline points="631.5,540.5 631.5,550.5 650.5,550.5 650.5,569.5 668.5,569.5 668.5,605.5" fill="none" stroke="#c42a30" stroke-width="1"/><polyline points="658.5,540.5 658.5,560.5 695.5,560.5 695.5,605.5" fill="none" stroke="#c42a30" stroke-width="1"/><polyline points="686.5,540.5 686.5,550.5 704.5,550.5 704.5,569.5 723.5,569.5 723.5,605.5" fill="none" stroke="#c42a30" stroke-width="1"/><rect x="631.5" y="605.5" width="137" height="27" fill="#fff" stroke="#c42a30" stroke-width="1" /><line x1="658.5" y1="605" x2="658.5" y2="633" stroke="#c42a30"/><line x1="686.5" y1="605" x2="686.5" y2="633" stroke="#c42a30"/><line x1="713.5" y1="605" x2="713.5" y2="633" stroke="#c42a30"/><line x1="741.5" y1="605" x2="741.5" y2="633" stroke="#c42a30"/><text x="645.15" y="621.5" font-family="Liberation Serif" font-size="12" font-weight="normal" fill="#c42a30" text-anchor="middle" >1</text><text x="672.65" y="621.5" font-family="Liberation Serif" font-size="12" font-weight="normal" fill="#c42a30" text-anchor="middle" >2</text><text x="700.0" y="621.5" font-family="Liberation Serif" font-size="12" font-weight="normal" fill="#c42a30" text-anchor="middle" >3</text><text x="727.5" y="621.5" font-family="Liberation Serif" font-size="12" font-weight="normal" fill="#c42a30" text-anchor="middle" >4</text><text x="754.7" y="621.5" font-family="Liberation Serif" font-size="12" font-weight="normal" fill="#c42a30" text-anchor="middle" >5</text><rect x="668.5" y="633.5" width="64" height="27" fill="#fff" stroke="#c42a30" stroke-width="1" /><text x="700" y="649" font-family="Liberation Serif" font-size="11.5" font-weight="normal" fill="#c42a30" text-anchor="middle" >Switch 2</text><polyline points="695.5,660.5 695.5,669.5 805.5,669.5 805.5,751.5 668.5,751.5" fill="none" stroke="#c42a30" stroke-width="1"/><polyline points="713.5,540.5 713.5,550.5 732.5,550.5 732.5,560.5 750.5,560.5 750.5,569.5" fill="none" stroke="#3ccf3c" stroke-width="1"/><polyline points="741.5,540.5 741.5,550.5 759.5,550.5 759.5,560.5 777.5,560.5 777.5,569.5" fill="none" stroke="#3ccf3c" stroke-width="1"/><polyline points="768.5,540.5 768.5,550.5 786.5,550.5 786.5,560.5 805.5,560.5 805.5,569.5" fill="none" stroke="#3ccf3c" stroke-width="1"/><polyline points="796.5,540.5 796.5,550.5 814.5,550.5 814.5,560.5 832.5,560.5 832.5,569.5" fill="none" stroke="#3ccf3c" stroke-width="1"/><polyline points="823.5,540.5 823.5,550.5 841.5,550.5 841.5,560.5 859.5,560.5 859.5,569.5" fill="none" stroke="#3ccf3c" stroke-width="1"/><rect x="741.5" y="569.5" width="164" height="27" fill="#fff" stroke="#3ccf3c" stroke-width="1" /><line x1="768.5" y1="569" x2="768.5" y2="596" stroke="#3ccf3c"/><line x1="796.5" y1="569" x2="796.5" y2="596" stroke="#3ccf3c"/><line x1="823.5" y1="569" x2="823.5" y2="596" stroke="#3ccf3c"/><line x1="850.5" y1="569" x2="850.5" y2="596" stroke="#3ccf3c"/><line x1="878.5" y1="569" x2="878.5" y2="596" stroke="#3ccf3c"/><text x="755.0" y="584" font-family="Liberation Serif" font-size="12" font-weight="normal" fill="#3ccf3c" text-anchor="middle" >1</text><text x="782.6" y="584" font-family="Liberation Serif" font-size="12" font-weight="normal" fill="#3ccf3c" text-anchor="middle" >2</text><text x="810.05" y="584" font-family="Liberation Serif" font-size="12" font-weight="normal" fill="#3ccf3c" text-anchor="middle" >3</text><text x="837.3" y="584" font-family="Liberation Serif" font-size="12" font-weight="normal" fill="#3ccf3c" text-anchor="middle" >4</text><text x="864.65" y="584" font-family="Liberation Serif" font-size="12" font-weight="normal" fill="#3ccf3c" text-anchor="middle" >5</text><text x="891.8499999999999" y="584" font-family="Liberation Serif" font-size="12" font-weight="normal" fill="#3ccf3c" text-anchor="middle" >6</text><rect x="796.5" y="596.5" width="64" height="27" fill="#fff" stroke="#3ccf3c" stroke-width="1" /><text x="827" y="612" font-family="Liberation Serif" font-size="11.5" font-weight="normal" fill="#3ccf3c" text-anchor="middle" >Switch 3</text><polyline points="832.5,622.5 832.5,788.5 668.5,788.5" fill="none" stroke="#3ccf3c" stroke-width="1"/><text x="694" y="704" font-family="Liberation Serif" font-size="12" font-weight="normal" fill="#4a6cc0" text-anchor="start" >internet</text><polyline points="694,704.5 696,706.5 698,704.5 700,706.5 702,704.5 704,706.5 706,704.5 708,706.5 710,704.5 712,706.5 714,704.5 716,706.5 718,704.5 720,706.5 722,704.5 724,706.5 726,704.5 728,706.5 730,704.5 732,706.5" fill="none" stroke="#2ca02c" stroke-width="0.9"/><text x="712" y="741" font-family="Liberation Serif" font-size="12" font-weight="normal" fill="#c42a30" text-anchor="start" >téléphone</text><polyline points="712,741.5 714,743.5 716,741.5 718,743.5 720,741.5 722,743.5 724,741.5 726,743.5 728,741.5 730,743.5 732,741.5 734,743.5 736,741.5 738,743.5 740,741.5 742,743.5 744,741.5 746,743.5 748,741.5 750,743.5 752,741.5 754,743.5 756,741.5 758,743.5" fill="none" stroke="#2ca02c" stroke-width="0.9"/><text x="739.5" y="776" font-family="Liberation Serif" font-size="12" font-weight="normal" fill="#3ccf3c" text-anchor="start" >télévision</text><polyline points="740,776.5 742,778.5 744,776.5 746,778.5 748,776.5 750,778.5 752,776.5 754,778.5 756,776.5 758,778.5 760,776.5 762,778.5 764,776.5 766,778.5 768,776.5 770,778.5 772,776.5 774,778.5 776,776.5 778,778.5 780,776.5 782,778.5 784,776.5 786,778.5" fill="none" stroke="#2ca02c" stroke-width="0.9"/><text x="830" y="831" font-family="Liberation Serif" font-size="12" font-weight="bold" fill="#e8900c" text-anchor="start" >ARMOIRE</text><text x="850.5" y="484" font-family="Liberation Serif" font-size="12" font-weight="normal" fill="#000" text-anchor="start" >Départs combles</text><path d="M851 505.5 Q851 496.5 858 496.5 H888.5 Q891.8 496.5 892.3 488 Q893 496.5 896.5 496.5 H899.5 Q905.6 496.5 905.6 505.5" fill="none" stroke="#222" stroke-width="1.1"/><polyline points="504.5,769.5 476.5,769.5 476.5,869.5" fill="none" stroke="#000" stroke-width="1"/><text x="466" y="886" font-family="Liberation Serif" font-size="12" font-weight="normal" fill="#000" text-anchor="start" >Arrivée PTT</text></svg>
<svg style="position:absolute;left:505px;top:697px" width="162" height="125" viewBox="0 0 162 125">
<defs>
<linearGradient id="nbL" x1="0" x2="1" y1="0" y2="0"><stop offset="0" stop-color="#b4b4b4"/><stop offset="0.025" stop-color="#dadada"/><stop offset="0.06" stop-color="#ececec"/><stop offset="0.12" stop-color="#f8f8f8"/><stop offset="0.88" stop-color="#f8f8f8"/><stop offset="0.94" stop-color="#e8e8e8"/><stop offset="0.975" stop-color="#d4d4d4"/><stop offset="1" stop-color="#a8a8a8"/></linearGradient>
<linearGradient id="nbT" x1="0" x2="0" y1="0" y2="1"><stop offset="0" stop-color="#dcdcdc"/><stop offset="0.3" stop-color="#f4f4f4"/><stop offset="0.85" stop-color="#ececec"/><stop offset="1" stop-color="#c4c4c4"/></linearGradient>
<linearGradient id="nbB" x1="0" x2="0" y1="0" y2="1"><stop offset="0" stop-color="#cdcdcd"/><stop offset="0.2" stop-color="#ededed"/><stop offset="0.75" stop-color="#e8e8e8"/><stop offset="1" stop-color="#9a9a9a"/></linearGradient>
<linearGradient id="nbM" x1="0" x2="1" y1="0" y2="0"><stop offset="0" stop-color="#ececec"/><stop offset="0.1" stop-color="#fdfdfd"/><stop offset="0.9" stop-color="#fdfdfd"/><stop offset="1" stop-color="#ececec"/></linearGradient>
</defs>
<rect x="2.5" y="2.5" width="156" height="119" rx="7" fill="url(#nbL)" stroke="#b4b4b4"/>
<rect x="4" y="3" width="153" height="15" rx="6" fill="url(#nbT)"/>
<rect x="11" y="18" width="140" height="86" fill="url(#nbM)"/>
<rect x="4" y="104" width="153" height="17" rx="6" fill="url(#nbB)"/>
<rect x="80.5" y="6" width="1" height="12" fill="#b0b0b0"/>
<text x="81" y="51.5" font-family="Liberation Sans" font-size="9.5" fill="#c8402a" text-anchor="middle" stroke="#c8402a" stroke-width="0.25">neufbox</text>
<rect x="77" y="59" width="8.5" height="8.5" fill="#d0202a"/>
<g fill="#e8b8b8"><rect x="46" y="102" width="2" height="1"/><rect x="59" y="102" width="3" height="1"/><rect x="72" y="102" width="2" height="1"/><rect x="85" y="102" width="2" height="1"/><rect x="98" y="102" width="2" height="1"/><rect x="111" y="102" width="3" height="1"/></g>
</svg>
<svg style="position:absolute;left:370px;top:850px" width="70" height="60" viewBox="0 0 70 60">
<g stroke="#c8c8c8" stroke-width="1" fill="none">
<path d="M27 28 L56 20 M27 31 L56 27 M27 34 L56 33"/>
<path d="M12 15 L29 20 M11 19 L28 24 M10 23 L27 28 M9 27 L26 32"/>
<path d="M22 12 L14 40 M14 36 L22 52 M19 36 L25 52"/>
</g>
<g stroke="#1e1e1e" stroke-linecap="round" fill="none">
<path d="M15.5 11.5 L8 29.5" stroke-width="1.7"/>
<path d="M30.5 19 L26 32" stroke-width="1.7"/>
<path d="M8 34 L17 49" stroke-width="1.7"/>
<path d="M24.5 38.5 L32.5 52" stroke-width="1.8"/>
<path d="M56.5 18.5 Q58 25 57.5 32" stroke-width="2.2"/>
</g>
<path d="M22 34 L27 30 L28 35 Z" fill="#222"/>
</svg>
</body></html>
